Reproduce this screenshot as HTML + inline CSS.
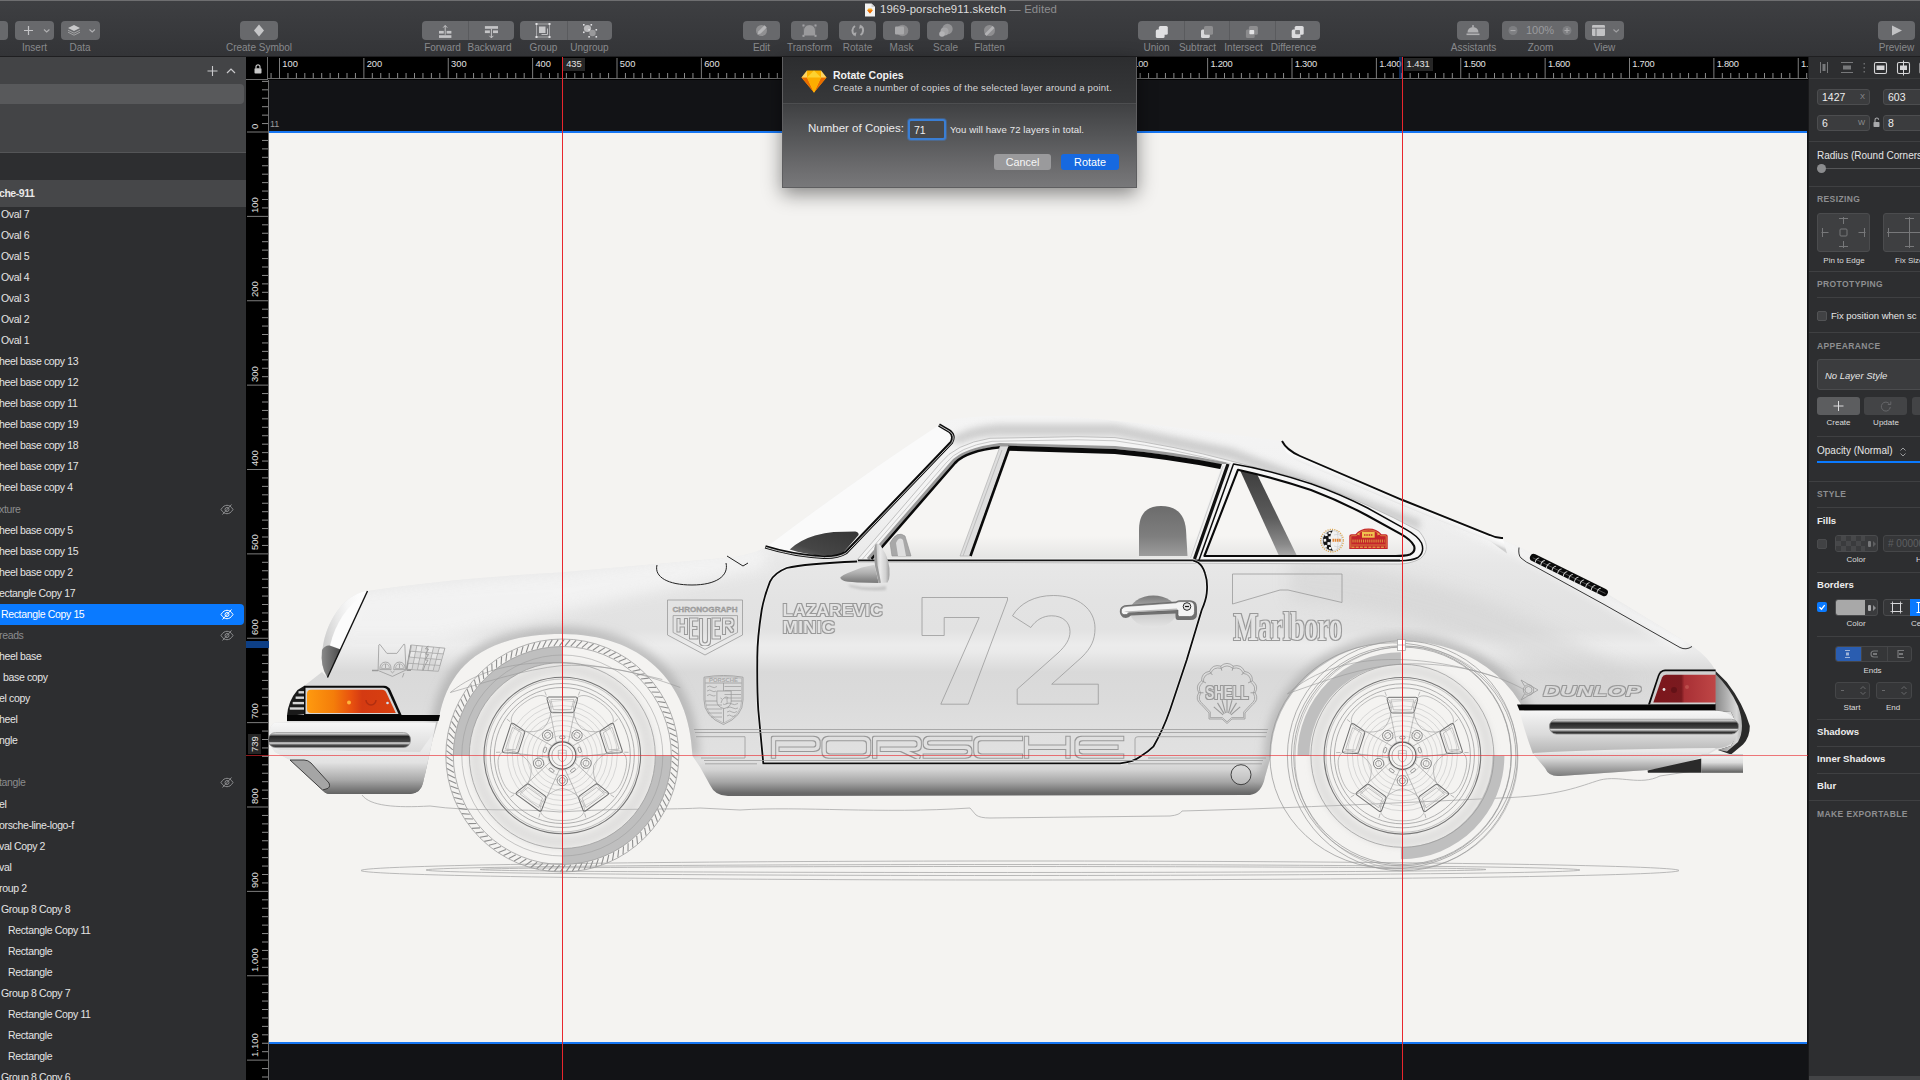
<!DOCTYPE html>
<html><head><meta charset="utf-8"><title>1969-porsche911.sketch</title>
<style>
*{box-sizing:border-box;margin:0;padding:0}
html,body{width:1920px;height:1080px;overflow:hidden;background:#121316;font-family:"Liberation Sans",sans-serif;}
body{position:relative;color:#e6e6e6;font-size:10.5px}
.abs{position:absolute}
#toolbar{position:absolute;left:0;top:0;width:1920px;height:57px;background:linear-gradient(#3e3f42 0px,#3a3b3e 20px,#333437 56px);border-top:1px solid #6e6e70;border-bottom:1px solid #1f1f21}
.tb{position:absolute;top:20px;height:19px;background:#68696c;border-radius:4px}
.tbl{position:absolute;top:41px;height:12px;line-height:12px;font-size:10px;color:#88898c;text-align:center;white-space:nowrap;transform:translateX(-50%)}
.tb svg{position:absolute;top:0;left:0}
.div{position:absolute;top:0;width:1px;height:19px;background:#5a5b5e}
#title{position:absolute;top:2px;left:880px;font-size:11.4px;color:#dcdcdc;white-space:nowrap;letter-spacing:0.1px}
#title span{color:#8e8e90}
#left{position:absolute;left:0;top:57px;width:246px;height:1023px;background:#2d2e30;overflow:hidden}
#left .top{position:absolute;left:0;top:0;width:246px;height:96px;background:#434446;border-bottom:1px solid #545557}
#left .pill{position:absolute;left:-6px;top:27px;width:250px;height:20px;border-radius:4px;background:#58595b}
#left .hdr{position:absolute;left:0;top:123px;width:246px;height:27px;background:#464749}
.row{position:absolute;left:0;width:246px;height:21px;line-height:21px;font-size:10.5px;letter-spacing:-0.35px;color:#e4e4e4;white-space:nowrap}
.row.dim{color:#8b8c8e}
.row.sel{background:#0a7aff;color:#fff;border-radius:0 4px 4px 0;width:244px}
.eye{position:absolute;left:220px;top:4px}
#rulerh{position:absolute;left:246px;top:57px;width:1562px;height:23px;background:#000;overflow:hidden}
#rulerv{position:absolute;left:246px;top:80px;width:23px;height:1000px;background:#000;overflow:hidden}
.rl{position:absolute;top:2px;font-size:9.3px;color:#e2e2e2;line-height:11px;white-space:nowrap}
.rlv{position:absolute;left:3px;font-size:9.5px;color:#e2e2e2;line-height:11px;white-space:nowrap;transform-origin:0 0;transform:rotate(-90deg)}
#artboard{position:absolute;left:269px;top:133px;width:1538px;height:910px;background:#f4f3f1}
#right{position:absolute;left:1808px;top:57px;width:112px;height:1023px;background:#2d2e30;overflow:hidden;border-left:1px solid #1a1a1c}
#right .sec{position:absolute;left:8px;font-size:8.5px;font-weight:bold;color:#8e8f91;letter-spacing:0.4px;white-space:nowrap}
#right .lab{position:absolute;font-size:10px;color:#e6e6e6;white-space:nowrap}
#right .blab{position:absolute;left:8px;font-size:9.6px;font-weight:bold;color:#ededed;white-space:nowrap}
#right .sm{position:absolute;font-size:8px;color:#dcdcdc;white-space:nowrap;transform:translateX(-50%)}
#right .hr{position:absolute;left:0;width:112px;height:1px;background:#3f4042}
#right .hr2{position:absolute;left:8px;width:104px;height:1px;background:#3f4042}
.fld{position:absolute;height:16px;background:#3b3c3e;border:1px solid #4c4d4f;border-radius:3px;font-size:10.5px;color:#eee;line-height:14px;padding-left:4px}
.fld i{position:absolute;right:4px;top:0;font-style:normal;font-size:7.5px;color:#8e8f91}
#dialog{position:absolute;left:782px;top:57px;width:355px;height:131px;background:linear-gradient(#2f3032 0,#3a3b3d 46px,#404143 48px,#545557 78px,#6a6a6c 108px,#79797b 131px);border:1px solid #5e5e60;border-top:none;box-shadow:0 6px 18px rgba(0,0,0,.45)}
</style></head><body>

<div id="artboard"></div>
<div class="abs" style="left:269px;top:131px;width:1538px;height:2px;background:#1676f3"></div>
<div class="abs" style="left:269px;top:1042px;width:1538px;height:2px;background:#1676f3"></div>
<div class="abs" style="left:270px;top:119px;font-size:9px;color:#9a9a9c">11</div>
<svg id="car" class="abs" style="left:269px;top:133px" width="1538" height="910" viewBox="269 133 1538 910">
<defs>
<linearGradient id="gBody" gradientUnits="userSpaceOnUse" x1="0" y1="415" x2="0" y2="800">
<stop offset="0.0000" stop-color="#f4f4f4"/><stop offset="0.2208" stop-color="#f1f1f1"/><stop offset="0.3377" stop-color="#ececec"/><stop offset="0.3896" stop-color="#e7e7e7"/><stop offset="0.4805" stop-color="#e3e3e3"/><stop offset="0.5584" stop-color="#e2e2e2"/><stop offset="0.5974" stop-color="#ececec"/><stop offset="0.6156" stop-color="#eaeaea"/><stop offset="0.6675" stop-color="#d9d9d9"/><stop offset="0.7403" stop-color="#dbdbdb"/><stop offset="0.8182" stop-color="#dfdfdf"/><stop offset="0.8961" stop-color="#e1e1e1"/><stop offset="0.9221" stop-color="#d2d2d2"/><stop offset="0.9532" stop-color="#a6a6a6"/><stop offset="0.9818" stop-color="#6a6a6a"/><stop offset="1.0000" stop-color="#5e5e5e"/>
</linearGradient>
<linearGradient id="gGlass" gradientUnits="userSpaceOnUse" x1="0" y1="440" x2="0" y2="560">
<stop offset="0" stop-color="#f6f5f3"/><stop offset=".8" stop-color="#f6f5f3"/><stop offset="1" stop-color="#e4e4e3"/></linearGradient>
<linearGradient id="gStrip" x1="0" y1="0" x2="0" y2="1">
<stop offset="0" stop-color="#f8f8f8"/><stop offset=".14" stop-color="#9a9a9a"/><stop offset=".26" stop-color="#262626"/><stop offset=".6" stop-color="#454545"/><stop offset=".7" stop-color="#e2e2e2"/><stop offset=".8" stop-color="#777"/><stop offset=".9" stop-color="#2e2e2e"/><stop offset="1" stop-color="#555"/></linearGradient>
<linearGradient id="gBump" x1="0" y1="0" x2="0" y2="1">
<stop offset="0" stop-color="#f7f7f7"/><stop offset=".2" stop-color="#ebebeb"/><stop offset=".55" stop-color="#dadada"/><stop offset=".75" stop-color="#c8c8c8"/><stop offset="1" stop-color="#b4b4b4"/></linearGradient>
<linearGradient id="gVal" gradientUnits="userSpaceOnUse" x1="0" y1="745" x2="0" y2="795">
<stop offset="0" stop-color="#ececec"/><stop offset=".35" stop-color="#e2e2e2"/><stop offset=".7" stop-color="#a9a9a9"/><stop offset="1" stop-color="#5d5d5d"/></linearGradient>
<linearGradient id="gValR" gradientUnits="userSpaceOnUse" x1="0" y1="751" x2="0" y2="777"><stop offset="0" stop-color="#eaeaea"/><stop offset=".3" stop-color="#d6d6d6"/><stop offset=".65" stop-color="#a6a6a6"/><stop offset="1" stop-color="#767676"/></linearGradient>
<linearGradient id="gAmber" x1="0" y1="0" x2="1" y2="0">
<stop offset="0" stop-color="#ff9a0f"/><stop offset=".3" stop-color="#f47d0a"/><stop offset=".5" stop-color="#e8510f"/><stop offset=".62" stop-color="#d43a12"/><stop offset="1" stop-color="#d8400f"/></linearGradient>
<linearGradient id="gRed" x1="0" y1="0" x2="1" y2="0">
<stop offset="0" stop-color="#7d161c"/><stop offset=".45" stop-color="#7a1a1f"/><stop offset=".5" stop-color="#a83035"/><stop offset="1" stop-color="#bf4646"/></linearGradient>
<linearGradient id="gPipe" x1="0" y1="0" x2="0" y2="1">
<stop offset="0" stop-color="#c9c9c9"/><stop offset=".15" stop-color="#efefef"/><stop offset=".45" stop-color="#dcdcdc"/><stop offset=".75" stop-color="#9a9a9a"/><stop offset="1" stop-color="#5a5a5a"/></linearGradient>
<linearGradient id="gDash" x1="0" y1="1" x2="1" y2="0"><stop offset="0" stop-color="#6a6a6a"/><stop offset=".3" stop-color="#464646"/><stop offset="1" stop-color="#363636"/></linearGradient>
<linearGradient id="gSeat" x1="0" y1="0" x2="0" y2="1"><stop offset="0" stop-color="#6c6c6c"/><stop offset=".6" stop-color="#7e7e7e"/><stop offset="1" stop-color="#9c9c9c"/></linearGradient>
<linearGradient id="gBar" x1="0" y1="0" x2="0" y2="1"><stop offset="0" stop-color="#3c3c3c"/><stop offset=".55" stop-color="#5c5c5c"/><stop offset=".85" stop-color="#8a8a8a"/><stop offset="1" stop-color="#b0b0b0"/></linearGradient>
<linearGradient id="gRG" gradientUnits="userSpaceOnUse" x1="1400" y1="499" x2="1397.5" y2="505"><stop offset="0" stop-color="#fbfbfb"/><stop offset=".6" stop-color="#eeeeee"/><stop offset="1" stop-color="#cfcfcf"/></linearGradient>
<linearGradient id="gMir" x1="0" y1="0" x2="0" y2="1"><stop offset="0" stop-color="#d2d2d2"/><stop offset=".45" stop-color="#b0b0b0"/><stop offset=".8" stop-color="#8a8a8a"/><stop offset="1" stop-color="#7a7a7a"/></linearGradient>
<linearGradient id="gWedge" x1="0" y1="0" x2="1" y2="0"><stop offset="0" stop-color="#8a8a8a"/><stop offset=".5" stop-color="#6a6a6a"/><stop offset="1" stop-color="#4a4a4a"/></linearGradient>
<linearGradient id="gRec" x1="0" y1="0" x2="0" y2="1"><stop offset="0" stop-color="#7a7a7a"/><stop offset=".35" stop-color="#a8a8a8"/><stop offset=".6" stop-color="#cdcdcd"/><stop offset="1" stop-color="#e4e4e4"/></linearGradient>
<linearGradient id="gMirH" x1="0" y1="0" x2="1" y2="0"><stop offset="0" stop-color="#b4b4b4"/><stop offset=".4" stop-color="#e9e9e9"/><stop offset=".75" stop-color="#d0d0d0"/><stop offset="1" stop-color="#9c9c9c"/></linearGradient>
<linearGradient id="gGuard" x1="0" y1="0" x2="1" y2="0"><stop offset="0" stop-color="#8a8a8a"/><stop offset=".45" stop-color="#b4b4b4"/><stop offset=".8" stop-color="#d8d8d8"/><stop offset="1" stop-color="#b0b0b0"/></linearGradient>
<linearGradient id="gHead" x1="0" y1=".5" x2="1" y2=".2"><stop offset="0" stop-color="#cdcdcd"/><stop offset=".35" stop-color="#e8e8e8"/><stop offset=".6" stop-color="#f6f6f6"/><stop offset="1" stop-color="#ffffff"/></linearGradient>
<filter id="ol" x="-5%" y="-5%" width="110%" height="110%"><feMorphology in="SourceAlpha" operator="dilate" radius="0.55" result="d"/><feComposite in="d" in2="SourceAlpha" operator="out" result="e"/><feFlood flood-color="#999999"/><feComposite in2="e" operator="in"/></filter>
<filter id="blur3"><feGaussianBlur stdDeviation="3"/></filter>
<filter id="blur5"><feGaussianBlur stdDeviation="5"/></filter>
<filter id="blur8"><feGaussianBlur stdDeviation="8"/></filter>
<filter id="blur1"><feGaussianBlur stdDeviation="1"/></filter>
</defs>
<clipPath id="cBody"><path d="M327.5,677.5 C318,665 320,630 342,605 C350,597 358,592 367.5,591 Q450,578.5 560,572.5 L735,557 Q755,553 766,547.5 Q850,483 937.5,426 C941,422 950,419.5 962,418 C990,415 1040,414.5 1080,417.5 C1140,422 1220,433 1282.5,441 C1290,452 1296,455 1302,457 L1402.5,500 L1500,539 L1517.5,546 L1605,592.5 L1692.5,646 Q1708,657 1715.6,670.4 L1715.6,711 L1731,712 Q1741,729 1731,746 L1716,750 Q1690,766 1648,770 L1560,776 Q1549,777 1545,768 L1535,756 A132,115 0 0 0 1271,756 L1265,777 Q1262,793 1250,795 L728,796 Q715,796 710,785 L700,767 L692.5,756 C690,680 640,634 562,634 C482,634 448,668 439,718 L432.5,740 L423,783 Q421,793 410,794 L330,794 Q325,794 322.5,790 L290,760 L275,752 L270,745 L269,735 Q270,722.5 276,722.5 L287,722 L287,715 Q288,702 297,691 L304,686 L322,672 Z"/></clipPath>
<g fill="none" stroke="#a9a9a9" stroke-width="0.8">
<ellipse cx="1020" cy="870.5" rx="659" ry="9.5"/>
<ellipse cx="1003" cy="870" rx="577" ry="5.5"/>
<ellipse cx="983" cy="869.5" rx="503" ry="3"/>
<path d="M362,795 C370,806 395,808 430,806 C470,812 520,808 560,812 C620,808 660,810 700,808 L740,810 C800,806 880,814 970,808 L976,815 Q980,818 990,818 L1170,816 Q1180,815 1182,811 L1250,809 C1330,806 1420,802 1500,798 C1560,796 1580,786 1600,780 C1620,775 1640,786 1660,776 L1700,770"/>
</g>
<path d="M327.5,677.5 C318,665 320,630 342,605 C350,597 358,592 367.5,591 Q450,578.5 560,572.5 L735,557 Q755,553 766,547.5 Q850,483 937.5,426 C941,422 950,419.5 962,418 C990,415 1040,414.5 1080,417.5 C1140,422 1220,433 1282.5,441 C1290,452 1296,455 1302,457 L1402.5,500 L1500,539 L1517.5,546 L1605,592.5 L1692.5,646 Q1708,657 1715.6,670.4 L1715.6,711 L1731,712 Q1741,729 1731,746 L1716,750 Q1690,766 1648,770 L1560,776 Q1549,777 1545,768 L1535,756 A132,115 0 0 0 1271,756 L1265,777 Q1262,793 1250,795 L728,796 Q715,796 710,785 L700,767 L692.5,756 C690,680 640,634 562,634 C482,634 448,668 439,718 L432.5,740 L423,783 Q421,793 410,794 L330,794 Q325,794 322.5,790 L290,760 L275,752 L270,745 L269,735 Q270,722.5 276,722.5 L287,722 L287,715 Q288,702 297,691 L304,686 L322,672 Z" fill="url(#gBody)"/>
<g clip-path="url(#cBody)">
<path d="M692.5,756 C690,680 640,634 562,634 C482,634 448,668 439,718 L423,783" fill="none" stroke="#9a9a9a" stroke-opacity=".55" stroke-width="14" filter="url(#blur5)"/>
<path d="M1535,756 A132,115 0 0 0 1271,756 L1265,777" fill="none" stroke="#9a9a9a" stroke-opacity=".55" stroke-width="14" filter="url(#blur5)"/>
<path d="M350,591 Q450,578.5 560,572.5 L766,547.5 L766,568 L660,590 L560,612 L440,640 L335,640Z" fill="#f6f6f6" opacity=".8" filter="url(#blur8)"/>
<path d="M1290,560 C1400,565 1520,600 1640,680 L1600,700 C1500,640 1400,610 1290,600Z" fill="#d2d2d2" opacity=".55" filter="url(#blur8)"/>
<path d="M1430,520 C1500,540 1580,590 1680,650 L1690,640 L1500,536Z" fill="#fafafa" opacity=".8" filter="url(#blur5)"/>
<path d="M960,444 Q975,436 1000,436 L1115,436 L1232,460 L1420,530 L1420,520 L1232,448 L1115,424 L1000,424 Q965,426 950,440Z" fill="#c2c2c2" opacity=".75" filter="url(#blur3)"/>
</g>
<path d="M767,546.5 Q851,483 937.5,426 L950,432 L952,441 L846,551 Q838,556 824,555.8 C800,554.5 780,550.5 767,546.5 Z" fill="#fafafa"/>
<path d="M789.700,549.5 Q800,540 815,535.600 Q825,532.5 833.700,531.900 L855.3,531.400 Q859,532 858.600,535 L843,553 Q836,556.5 824,555.8 Q805,554.5 789.700,549.5 Z" fill="url(#gDash)"/>
<path d="M765.3,546.900 C780,551.5 800,556 824,557.2 Q838,557.5 846,552.5 L951.3,442.5 Q955,436 950,431.5 L939,425" fill="none" stroke="#0c0c0c" stroke-width="3.600" stroke-linejoin="round"/>
<path d="M765.3,546.900 C780,551.5 800,556 824,557.2 Q838,557.5 846,552.5 L951.3,442.5 Q955,436 950,431.5 L939,425" fill="none" stroke="#f2f2f2" stroke-width="0.8" stroke-linejoin="round" transform="translate(0.400,0.400)"/>
<path d="M857,560 L940.5,463 Q955,444 990,438.3 L1077,436.700 L1115,437.600 Q1175,446 1231,461 L1305,480 Q1370,504 1419,531 Q1433,548 1420.5,558.5 Q1412,563.5 1400,564 L857,562 Z" fill="#f4f4f4" stroke="#b4b4b4" stroke-width="0.8"/>
<path d="M862.5,559 L946,463 Q958.5,447 992,441.3 L1077,439.8 L1115,440.8 Q1175,449 1231,464" fill="none" stroke="#c9c9c9" stroke-width="1"/>
<path d="M868,559 L951.5,463 Q963,449.5 1000,444.600 L1115,447.5 Q1170,452.5 1226,464" fill="none" stroke="#9a9a9a" stroke-width="3"/>
<path d="M872,558.5 L955.5,463.5 Q966.5,451.5 1000,448 L1115,452 Q1170,457 1224,468 L1193,558.5 Z" fill="url(#gGlass)"/>
<path d="M871.5,559 L955,463 Q966,451 1000,447.3" fill="none" stroke="#0a0a0a" stroke-width="2.600"/>
<path d="M1008,448.3 L1115,451.5 Q1170,456.5 1223,467" fill="none" stroke="#0a0a0a" stroke-width="5"/>
<path d="M1139,556 L1139,530 Q1139,506 1161,506 Q1184,506 1186,530 L1187.5,556 Z" fill="url(#gSeat)"/>
<path d="M1000,446.5 L1009,446.5 L970,556 L960,556 Z" fill="#dedede" stroke="#a9a9a9" stroke-width="0.6"/>
<path d="M1009.5,447 L970.5,556" stroke="#0a0a0a" stroke-width="2.600"/>
<path d="M1002,450 L963,556" stroke="#bdbdbd" stroke-width="1"/>
<path d="M890,543 Q897,530 905,536 L911,556 L892,556 Z" fill="#a8a8a8" stroke="#8e8e8e" stroke-width="0.6"/>
<path d="M896,543 Q899,536 903,540 L906,556 L898,556Z" fill="#dedede"/>
<path d="M1222,464 L1233,464 L1203,559 L1189,559 Z" fill="#f1f1f1"/>
<path d="M1228,464 L1194.5,559" stroke="#111" stroke-width="3.2"/>
<path d="M1223,466 L1190.5,558" stroke="#c4c4c4" stroke-width="0.8"/>
<path d="M1233.5,464 Q1270,470 1311,483.8 Q1340,494 1367.600,508 L1405,528.8 Q1418,536 1421.5,543 Q1425,552 1418,557.5 Q1412,560.700 1400,560.700 L1198.8,560.700 Z" fill="#f6f6f6"/>
<path d="M1238,469.700 Q1275,478 1311,490 Q1340,501 1367.600,515.700 L1401.400,534.400 Q1411,540 1414,545.700 Q1416,551.5 1410,554.5 Q1405,556 1395.8,556 L1204.400,556 Z" fill="url(#gGlass)"/>
<clipPath id="cQW"><path d="M1238,469.700 Q1275,478 1311,490 Q1340,501 1367.600,515.700 L1401.400,534.400 Q1411,540 1414,545.700 Q1416,551.5 1410,554.5 Q1405,556 1395.8,556 L1204.400,556 Z"/></clipPath>
<g clip-path="url(#cQW)"><path d="M1239,468 L1256,472 L1298,558 L1280,558 Z" fill="url(#gBar)"/></g>
<path d="M1238,469.700 Q1275,478 1311,490 Q1340,501 1367.600,515.700 L1401.400,534.400 Q1411,540 1414,545.700 Q1416,551.5 1410,554.5 Q1405,556 1395.8,556 L1204.400,556 Z" fill="none" stroke="#0a0a0a" stroke-width="2.100" stroke-linejoin="round"/>
<path d="M1233.5,464 Q1270,470 1311,483.8 Q1340,494 1367.600,508 L1405,528.8 Q1418,536 1421.5,543 Q1425,552 1418,557.5 Q1412,560.700 1400,560.700 L1198.8,560.700 Z" fill="none" stroke="#0a0a0a" stroke-width="1.5" stroke-linejoin="round"/>
<path d="M858,560.400 L1400,560.400" stroke="#151515" stroke-width="1.700"/>
<circle cx="1332" cy="540.600" r="11.3" fill="none" stroke="#d9a24a" stroke-width="1.3" stroke-dasharray="1.100 1.2"/>
<circle cx="1332" cy="540.600" r="10.2" fill="#f1f1f1" stroke="#b9b9b9" stroke-width="0.5"/>
<path d="M1333,530.400 A10.2,10.2 0 0 0 1333,550.8 Q1329,545 1331,540.600 Q1329,535 1333,530.400 Z" fill="#141414"/>
<g fill="#f4f4f4"><rect x="1325" y="533.5" width="2.600" height="2.600" transform="rotate(-12 1326 535)"/><rect x="1328.600" y="536.5" width="2.400" height="2.600" transform="rotate(-8 1329 538)"/><rect x="1323.600" y="538.8" width="2.600" height="2.8" transform="rotate(-5 1325 540)"/><rect x="1327.5" y="542" width="2.5" height="2.700" transform="rotate(6 1328 543)"/><rect x="1324.5" y="545" width="2.5" height="2.5" transform="rotate(12 1326 546)"/><rect x="1329" y="547" width="2.2" height="2.2"/><rect x="1328.5" y="531.8" width="2.3" height="2.2"/></g>
<path d="M1334,535 Q1338,533 1341,536 M1334,546 Q1338,548.5 1341,545 M1337,531 Q1340,540.600 1337,550" fill="none" stroke="#c4c4c4" stroke-width="0.5"/>
<path d="M1332.5,540.3 h8.5" stroke="#e07a20" stroke-width="3" stroke-dasharray="1.600 0.600" opacity=".9"/>
<path d="M1349.3,549 L1349.3,536 Q1349.3,534.2 1351.5,534.2 L1355.5,534.2 Q1360,528.400 1368.5,528.400 Q1377,528.400 1381.5,534.2 L1385.5,534.2 Q1387.700,534.2 1387.700,536 L1387.700,549 Z" fill="#c4242a"/>
<path d="M1350.8,547.8 L1350.8,536.5 Q1350.8,535.700 1352,535.700 L1356.3,535.700 Q1360.5,530 1368.5,530 Q1376.5,530 1380.700,535.700 L1385,535.700 Q1386.2,535.700 1386.2,536.5 L1386.2,547.8" fill="none" stroke="#e9b44c" stroke-width="0.6"/>
<rect x="1362" y="531.700" width="12.700" height="6" fill="#f0c24e"/><path d="M1364,535 h9" stroke="#c8252b" stroke-width="1.600" stroke-dasharray="1.5 0.8"/>
<path d="M1352.5,541 h32" stroke="#dc9a40" stroke-width="3.2" stroke-dasharray="1 1.100"/>
<path d="M1351.5,545 h34" stroke="#e9b44c" stroke-width="0.6"/><path d="M1351.5,547.2h34" stroke="#f0c24e" stroke-width="1" stroke-dasharray="3 1.2"/>
<path d="M1357,534 l2.5,-1.5 v3z M1380,534 l-2.5,-1.5 v3z" fill="#e9b44c"/><path d="M657,565 C654,577 668,585 692,585 C716,585 729,576 726,563" fill="none" stroke="#222" stroke-width="1"/>
<path d="M727,556 L743,566 L748,563" fill="none" stroke="#222" stroke-width="1"/>
<path d="M857,561.5 C820,563 795,566 786.7,568 Q774,573 770,581.7 Q764,597 761.7,610 Q757,640 757.3,660 Q757,690 758.3,710 L763.3,763.3 L1120,763.3 Q1133,762 1140,756.7 Q1148,752 1153.3,746.7 Q1163,730 1170,710 L1186.7,660 L1201.7,610 Q1206,600 1206.7,593.3 Q1208,582 1205,573.3 Q1203,566 1198,562.5 L1193,560.5" fill="none" stroke="#fff" stroke-opacity=".6" stroke-width="3"/>
<path d="M857,561.5 C820,563 795,566 786.7,568 Q774,573 770,581.7 Q764,597 761.7,610 Q757,640 757.3,660 Q757,690 758.3,710 L763.3,763.3 L1120,763.3 Q1133,762 1140,756.7 Q1148,752 1153.3,746.7 Q1163,730 1170,710 L1186.7,660 L1201.7,610 Q1206,600 1206.7,593.3 Q1208,582 1205,573.3 Q1203,566 1198,562.5 L1193,560.5" fill="none" stroke="#0c0c0c" stroke-width="1.8"/>
<path d="M848,584.5 Q868,589 886,586 L886,590 Q866,592 850,587 Z" fill="#a8a8a8" opacity=".5" filter="url(#blur1)"/>
<path d="M840.3,577.3 Q843,575 847.8,573.1 L861.8,567.5 L874.5,564.7 L878.7,582.9 L857.2,582.5 Q846,582 843.1,580.6 Q840,579 840.3,577.3 Z" fill="url(#gMir)"/>
<path d="M876.4,543.6 Q880,543.5 882.5,548.7 Q886.5,554 888.1,560.9 Q890,568 889.5,575 Q889.5,580 887.6,582.5 L878.7,582.9 L875,565.6 L874,552.5 Q874.5,545 876.4,543.6 Z" fill="url(#gMirH)"/>
<path d="M876.4,543.6 Q874.5,545 874,552.5 L875,565.6 L878.7,582.9 L881,582.8 L877.5,565 L876.8,552 Z" fill="#9a9a9a"/>
<ellipse cx="1153.3" cy="611.5" rx="23.5" ry="16" fill="url(#gRec)"/>
<path d="M1123,617.5 Q1119,614 1120,609.5 Q1121.5,605 1127,605 L1176,601.5 Q1178,600.3 1180,600.3 L1190.5,600.3 Q1197,601 1197,607 L1197,614 Q1197,620 1190.5,620 L1178,620 Q1175.5,620 1175.5,617 L1175.5,613.5 L1131,615.5 Q1128,619 1123,617.5 Z" fill="#707070"/>
<path d="M1123,614.5 Q1120.5,612.5 1121.5,609.5 Q1123,606.3 1127,606.3 L1176,602.8 Q1178,601.6 1180,601.6 L1189.5,601.6 Q1194.5,602 1194.5,607 L1194.5,611.5 Q1194.5,616.5 1189.5,616.5 L1179.5,616.5 Q1178,616.5 1178,614.5 L1178,610 L1129,612.5 Q1127,615.5 1123,614.5 Z" fill="#f4f4f4" stroke="#5a5a5a" stroke-width="0.6"/>
<path d="M1124,611.5 L1177,608.5 L1177,610 L1128.5,612.5 Z" fill="#b5b5b5"/>
<circle cx="1187" cy="606.5" r="3.8" fill="#e6e6e6" stroke="#2a2a2a" stroke-width="1"/><path d="M1185,606.5h4" stroke="#1a1a1a" stroke-width="1.2"/>
<path d="M367.5,591 C358,592 350,597 342,605 C320,630 318,665 327.5,677.5 Z" fill="url(#gHead)"/>
<path d="M365.5,592.5 L340.5,649 L330,645.5 Q338,612 365.5,592.5Z" fill="#fcfcfc"/>
<path d="M329.5,645.5 L340.5,649.5 L327.5,677.5 Q320,666 322,650 Q325,645 329.5,645.5 Z" fill="url(#gWedge)"/>
<path d="M367.5,591 L327.5,677.5" stroke="#111" stroke-width="1.4"/>
<path d="M287,716 Q288,701 297.5,690 L304,686 L307,686 L307,714 Z" fill="#1a1a1a"/>
<path d="M298.5,692.3 L306.5,692.3" stroke="#d6d6d6" stroke-width="2.4"/>
<path d="M295.6,697.7 L306.5,697.7" stroke="#d6d6d6" stroke-width="2.4"/>
<path d="M292.7,703.1 L306.5,703.1" stroke="#d6d6d6" stroke-width="2.4"/>
<path d="M289.8,708.5 L306.5,708.5" stroke="#d6d6d6" stroke-width="2.4"/>
<path d="M304,685.8 L384,685.8 Q388.5,686 390.5,690 L402,716 L304,716 Z" fill="#0a0a0a"/>
<path d="M305.5,687.8 L383,687.8 Q386.5,687.8 388,691 L398.5,714 L305.5,714 Z" fill="#d6d6d6"/>
<path d="M311,689.8 L382,689.8 Q385,689.8 386.5,693 L395.8,713 L311,713 Q307,713 307,709 L307,694 Q307,689.8 311,689.8 Z" fill="url(#gAmber)"/>
<circle cx="349" cy="702.5" r="2" fill="#ffb43a"/><path d="M366,700 a5,5 0 0 0 10,0" fill="none" stroke="#a82a10" stroke-width="1.5" opacity=".8"/><circle cx="387.5" cy="703" r="1.3" fill="#cfe0f0"/>
<path d="M287,715 L440,715 L438.5,721 L287,721 Z" fill="#050505"/>
<path d="M276,722.5 L436,722.5 L432.5,740 L425,775 Q424,752 270,746 L269,735 Q270,722.5 276,722.5 Z" fill="url(#gBump)"/>
<path d="M270,745 L275,752 L290,760 L322.5,790 Q325,794 330,794 L410,794 Q421,793 423,783 L432.5,740 L432,735 L420,752 L280,750 Z" fill="url(#gVal)"/>
<path d="M290,760 L304,760 Q308,760 311,763 L329,783 Q331,788 326,789 L322.5,790 Z" fill="#a5a5a5" stroke="#333" stroke-width="0.9"/>
<rect x="268.5" y="732.5" width="142" height="15" rx="7" fill="url(#gStrip)"/>
<rect x="268.5" y="732.5" width="142" height="15" rx="7" fill="none" stroke="#8c8c8c" stroke-width="0.7"/>
<path d="M1715.6,671 L1726.7,682 Q1743,703 1749.8,726 Q1750,737 1743,744.5 L1731,754.5 L1718,750 L1731,746 Q1741,729 1731,712 L1715.6,711 Z" fill="#2a2a2a"/>
<path d="M1715.6,674 Q1730,688 1738,706 Q1746,728 1738,742 L1727,751.5 L1718,750 L1731,746 Q1741,729 1731,712 L1715.6,711 Z" fill="url(#gGuard)"/>
<path d="M1648,704.6 L1657.8,675.5 Q1659.8,670 1665,669.6 L1715.6,669.6 L1715.6,705 Z" fill="#0a0a0a"/>
<path d="M1650,704.6 L1659.3,676 Q1660.8,671.3 1665.5,671.3 L1715.6,671.3 L1715.6,704.6 Z" fill="#cfcfcf"/>
<path d="M1653.3,702.5 L1662,677.5 Q1663,674.8 1666,674.8 L1715.6,674.8 L1715.6,702.5 Z" fill="url(#gRed)"/>
<circle cx="1664" cy="689.5" r="1.4" fill="#e6e6e6"/><circle cx="1674" cy="690" r="3" fill="#5e1015" opacity=".8"/><circle cx="1687" cy="687" r="2" fill="#c45a55" opacity=".7"/>
<path d="M1517,704.4 L1715.6,704.4 L1715.6,710.6 L1519.5,710.6 Z" fill="#050505"/>
<path d="M1519.5,710.8 L1715,710.8 Q1731,711 1736,722 Q1741,733 1733,742 Q1728,747.5 1716,748.5 L1600,752 Q1560,752 1533,754 Q1524,730 1519.5,710.8 Z" fill="url(#gBump)"/>
<path d="M1533,753 Q1600,749 1716,748 Q1690,766 1648,770 L1560,776 Q1549,777 1545,768 L1535,756 Z" fill="url(#gValR)"/>
<rect x="1549.5" y="719.3" width="189" height="14.8" rx="7" fill="url(#gStrip)"/>
<rect x="1549.5" y="719.3" width="189" height="14.8" rx="7" fill="none" stroke="#8c8c8c" stroke-width="0.7"/>
<path d="M1647.5,770.5 L1701.5,758.5 L1701.5,772.8 L1648,772.8 Z" fill="#2a2a2a"/>
<rect x="1701.5" y="754" width="41.5" height="18.8" fill="url(#gPipe)"/>
<path d="M1519,547.5 Q1518,555 1521,558 Q1525,562 1535,566.5 L1605,605 L1680,647.5 Q1686,650.5 1692,646.5" fill="none" stroke="#222" stroke-width="0.9"/>
<path d="M1282.5,442.5 Q1287,451 1300,457 L1402.5,501 L1490,536 Q1498,539.5 1503,539 L1507,553.5 L1490,541 L1402.5,505.5 L1298,461 Q1290,457 1286,452 Z" fill="url(#gRG)"/>
<path d="M1282,441 Q1286.5,450 1300,456 L1402.5,500 L1490,535 Q1497,538.5 1503,538" fill="none" stroke="#0c0c0c" stroke-width="1.9"/>
<g transform="translate(1532,552.6) rotate(26.2)"><rect x="0" y="0" width="86" height="7.6" rx="3.8" fill="#0a0a0a"/>
<path d="M7.2,7.6 Q6.0,3.5 8.8,1.5" fill="none" stroke="#dedede" stroke-width="0.9"/>
<path d="M13.4,7.6 Q12.2,3.5 15.0,1.5" fill="none" stroke="#dedede" stroke-width="0.9"/>
<path d="M19.7,7.6 Q18.5,3.5 21.3,1.5" fill="none" stroke="#dedede" stroke-width="0.9"/>
<path d="M25.9,7.6 Q24.8,3.5 27.6,1.5" fill="none" stroke="#dedede" stroke-width="0.9"/>
<path d="M32.2,7.6 Q31.0,3.5 33.8,1.5" fill="none" stroke="#dedede" stroke-width="0.9"/>
<path d="M38.5,7.6 Q37.2,3.5 40.1,1.5" fill="none" stroke="#dedede" stroke-width="0.9"/>
<path d="M44.7,7.6 Q43.5,3.5 46.3,1.5" fill="none" stroke="#dedede" stroke-width="0.9"/>
<path d="M51.0,7.6 Q49.8,3.5 52.6,1.5" fill="none" stroke="#dedede" stroke-width="0.9"/>
<path d="M57.2,7.6 Q56.0,3.5 58.8,1.5" fill="none" stroke="#dedede" stroke-width="0.9"/>
<path d="M63.5,7.6 Q62.2,3.5 65.0,1.5" fill="none" stroke="#dedede" stroke-width="0.9"/>
<path d="M69.7,7.6 Q68.5,3.5 71.3,1.5" fill="none" stroke="#dedede" stroke-width="0.9"/>
<path d="M76.0,7.6 Q74.8,3.5 77.5,1.5" fill="none" stroke="#dedede" stroke-width="0.9"/>
<path d="M3,4.3 H84" stroke="#f0f0f0" stroke-width="0.5" stroke-opacity=".55"/>
</g><g fill="none" stroke="#9a9a9a" stroke-width="0.8">
<path d="M922,597.5 L1007.5,597.5 L1007.5,600 L968.3,704.2 L940.8,704.2 L979.2,617.5 L944.2,617.5 L944.2,635.5 L922,635.5 Z"/>
<path d="M1012.5,615.8 C1020,603 1035,595.5 1053.3,595.5 C1078,595.5 1095,609 1095,628.3 C1095,640 1091,648 1082,657 L1051.7,684.2 L1098.3,684.2 L1098.3,704.2 L1017.2,704.2 L1017.2,689.2 L1058,653 C1066,645.5 1070,639 1070,631.7 C1070,622 1062.5,615.8 1051.7,615.8 C1043,615.8 1036,620 1030.8,627.5 Z"/>
<path d="M1232.5,574 L1342,574 L1342,602.5 L1288,590 L1280,590 L1232.5,604 Z"/>
<path d="M667.5,600 L742.5,600 L742.5,635 L705,655 L667.5,635 Z"/>
<path d="M673.1,615.6 L737.5,615.6 L737.5,632.5 L705,649.4 L673.1,632.5 Z"/>
<path d="M694,729.5 L1268,729.5 M695,732.5 L1267,732.5 M704,760.5 L1263,760.5 M705,763.8 L757,763.8 M1128,763.8 L1262,763.8"/>
<path d="M696,736.7 L745,736.7 L745,758 L701,758 M1135,758 L1135,739 Q1135,736.7 1138,736.7 L1266,736.7 M1266,758 L1148,758"/>
<circle cx="1241" cy="774.7" r="10" stroke="#333" stroke-width="0.9" fill="#d8d8d8" fill-opacity=".5"/>
</g>
<g filter="url(#ol)" font-family="Liberation Sans, sans-serif" font-weight="bold" fill="#000">
<text x="782.5" y="616.3" font-size="17.3" textLength="100" lengthAdjust="spacingAndGlyphs">LAZAREVIC</text>
<text x="782.5" y="632.5" font-size="17.3" textLength="52.5" lengthAdjust="spacingAndGlyphs">MINIC</text>
<text x="1543" y="695.7" font-size="15.5" font-style="italic" textLength="98" lengthAdjust="spacingAndGlyphs">DUNLOP</text>
<text x="1205.5" y="699.2" font-size="18.6" textLength="43" lengthAdjust="spacingAndGlyphs">SHELL</text>
</g>
<g filter="url(#ol)" font-family="Liberation Serif, serif" font-weight="bold" fill="#000"><text x="1233.5" y="640" font-size="41" textLength="108.5" lengthAdjust="spacingAndGlyphs">Marlboro</text></g>
<text x="672.5" y="611.8" font-family="Liberation Sans, sans-serif" font-weight="bold" font-size="7.4" fill="#aaaaaa" stroke="#8c8c8c" stroke-width="0.3" textLength="65" lengthAdjust="spacingAndGlyphs">CHRONOGRAPH</text>
<g filter="url(#ol)"><path d="M773.5,757.80000000001 L773.5,738.5 L813.0,738.5 Q818.0,738.5 818.0,743.5 L818.0,745.3 Q818.0,749.3 813.0,749.3 L779.5,749.3 M829.1,738.5 L863.6,738.5 Q868.6,738.5 868.6,743.5 L868.6,751.1 Q868.6,756.1 863.6,756.1 L829.1,756.1 Q824.1,756.1 824.1,751.1 L824.1,743.5 Q824.1,738.5 829.1,738.5 Z M874.7,757.80000000001 L874.7,738.5 L914.2,738.5 Q919.2,738.5 919.2,743.5 L919.2,745.3 Q919.2,749.3 914.2,749.3 L880.7,749.3 M901.2,749.3 L919.2,757.80000000001 M971.5,738.5 L930.3,738.5 Q925.3,738.5 925.3,742.5 L925.3,743.3 Q925.3,747.3 930.3,747.3 L964.8,747.3 Q969.8,747.3 969.8,751.3 L969.8,752.1 Q969.8,756.1 964.8,756.1 L923.5999999999999,756.1 M1022.1,738.5 L980.9,738.5 Q975.9,738.5 975.9,743.5 L975.9,751.1 Q975.9,756.1 980.9,756.1 L1022.1,756.1 M1026.5,736.8 L1026.5,757.80000000001 M1068.0,736.8 L1068.0,757.80000000001 M1026.5,747.3 L1068.0,747.3 M1123.3,738.5 L1082.1,738.5 Q1077.1,738.5 1077.1,743.5 L1077.1,751.1 Q1077.1,756.1 1082.1,756.1 L1123.3,756.1 M1077.1,747.3 L1117.6,747.3" fill="none" stroke="#000" stroke-width="3.4" stroke-linejoin="round"/></g>
<g filter="url(#ol)"><path d="M678.5,619 V631.5 M686,619 V634 M678.5,625.5 H686 M697.5,619.5 H691 V637.5 H697.5 M691,628 H696.5 M701,619 V640.5 Q701,644.5 705,644.5 Q709,644.5 709,640.5 V619 M720,619.5 H713.5 V637.5 H720 M713.5,628 H719 M724,634 V619.5 H729.5 Q732.5,619.5 732.5,622.5 Q732.5,625.5 729.5,625.5 H724 M728,625.5 L732.5,631.5" fill="none" stroke="#000" stroke-width="2.1" stroke-linecap="butt" stroke-linejoin="miter"/></g>
<g fill="none" stroke="#9a9a9a" stroke-width="0.8">
<path d="M378.1,670.5 L378.8,645 L379.8,644.3 L386.9,653.4 L396.9,653.4 L404,644 L404.8,644.6 L406,670 L392.4,676.4 Z"/>
<path d="M372,670.5 L378,670.5 M406.5,670.3 L411,670.3" stroke-width="1.6"/>
<path d="M379.8,669.6 Q380,662.1 385.5,662.1 Q391,662.1 391.1,669.6 Z M393.7,669.6 Q394,662.1 399.5,662.1 Q405,662.1 405.3,669.6 Z"/>
<path d="M381.5,668.5 Q382,664 385.5,663.8 Q389,664 389.5,668.5 Z M395.5,668.5 Q396,664 399.5,663.8 Q403,664 403.5,668.5 Z" stroke-width="0.6"/>
<path d="M385.5,664 v4 M399.5,664 v4 M390.5,671 l2,1.8 l2,-1.8 M404,673 L402.4,677.4" />
<path d="M411.2,645.0L406.7,669.3M416.8,645.5L412.0,669.6M422.4,646.1L417.3,669.9M428.0,646.6L422.5,670.2M433.7,647.1L427.8,670.6M439.3,647.7L433.1,670.9M444.9,648.2L438.4,671.2M411.2,645.0L444.9,648.2M410.1,651.1L443.3,654.0M408.9,657.1L441.6,659.7M407.8,663.2L440.0,665.5M406.7,669.3L438.4,671.2"/>
<path d="M411.2,645 L406.7,669.3" stroke-width="1.5"/>
<path d="M411.2,645.0L416.8,645.5L415.6,651.6L410.1,651.1Z" fill="#cfcfcf" fill-opacity=".5" stroke="none"/>
<path d="M408.9,657.1L414.4,657.6L413.2,663.6L407.8,663.2Z" fill="#cfcfcf" fill-opacity=".5" stroke="none"/>
<path d="M415.6,651.6L421.1,652.0L419.9,658.0L414.4,657.6Z" fill="#cfcfcf" fill-opacity=".5" stroke="none"/>
<path d="M413.2,663.6L418.6,664.0L417.3,669.9L412.0,669.6Z" fill="#cfcfcf" fill-opacity=".5" stroke="none"/>
<path d="M422.4,646.1L428.0,646.6L426.7,652.5L421.1,652.0Z" fill="#cfcfcf" fill-opacity=".5" stroke="none"/>
<path d="M419.9,658.0L425.3,658.4L423.9,664.3L418.6,664.0Z" fill="#cfcfcf" fill-opacity=".5" stroke="none"/>
<path d="M426.7,652.5L432.2,653.0L430.8,658.9L425.3,658.4Z" fill="#cfcfcf" fill-opacity=".5" stroke="none"/>
<path d="M423.9,664.3L429.3,664.7L427.8,670.6L422.5,670.2Z" fill="#cfcfcf" fill-opacity=".5" stroke="none"/>
<path d="M433.7,647.1L439.3,647.7L437.7,653.5L432.2,653.0Z" fill="#cfcfcf" fill-opacity=".5" stroke="none"/>
<path d="M430.8,658.9L436.2,659.3L434.7,665.1L429.3,664.7Z" fill="#cfcfcf" fill-opacity=".5" stroke="none"/>
<path d="M437.7,653.5L443.3,654.0L441.6,659.7L436.2,659.3Z" fill="#cfcfcf" fill-opacity=".5" stroke="none"/>
<path d="M434.7,665.1L440.0,665.5L438.4,671.2L433.1,670.9Z" fill="#cfcfcf" fill-opacity=".5" stroke="none"/>
<path d="M428,645.8 l-2.5,3 l3,0.3 l-3,5 l3,0.3 l-3.5,5.5 l3,0.3 l-3,5 l-2,5.5" stroke-width="0.9"/>
<path d="M704,677.2 Q723.5,673.8 743,677.2 L743,700 Q743,716.5 723.5,724.5 Q704,716.5 704,700 Z"/>
<path d="M705.3,678.3 Q723.5,675.2 741.7,678.3 L741.7,700 Q741.7,715.5 723.5,723 Q705.3,715.5 705.3,700 Z" stroke-width="0.5"/>
<path d="M705.3,683 H741.7 M723.5,683 V691 M723.5,708.5 V722.8 M705.3,701 H717 M731,701 H741.7"/>
<path d="M724.5,686.5 H741 M724.5,690.5 H741 M724.5,694.5 H741 M724.5,698 H741 M706,705 H722 M706.5,709 H722 M708,713 H722 M711,717 H722" stroke-width="1.2" stroke-opacity=".7"/>
<path d="M716.9,691 H731.2 V701 Q731.2,707 724,708.6 Q716.9,707 716.9,701 Z"/>
<path d="M721,703 q1,-4 3,-5 q2,-2 4,-0.5 q-1.5,1 -1,3 q1,2 -1,3.5 q-1.5,1 -3,0 M722,699 l-1.5,-1" stroke-width="0.7"/>
<path d="M707,687 q3,-2 5,0 q2,1.5 5,-0.5 M707,691 q3,-2 5,0 q2,1.5 4,0 M707,695.5 q3,-2 5,0 q2,1 3.5,0 M727,712 q3,-2 5,0 q2,1.5 5,-0.5 M727,716 q2.5,-2 4.5,0 q2,1 4,-0.5 M726,704 q3,-2 6,0 q2,1.5 6,-0.5 M727,708 q3,-2 6,0 q2,1.5 5,0" stroke-width="0.7"/>
<text x="709" y="681.8" font-family="Liberation Sans, sans-serif" font-weight="bold" font-size="4.6" fill="#a8a8a8" stroke="none" textLength="29" lengthAdjust="spacingAndGlyphs">PORSCHE</text>
<path d="M1201.4,704.7 Q1194.6,699.8 1198.7,692.7 Q1194.8,685.5 1201.6,680.8 Q1201.2,672.7 1209.5,671.3 Q1212.7,663.9 1220.7,666.1 Q1227.0,660.7 1233.3,666.1 Q1241.3,663.9 1244.6,671.4 Q1252.8,672.7 1252.4,680.9 Q1259.2,685.6 1255.3,692.7 Q1259.4,699.9 1252.6,704.7 L1245.0,713.0 L1245.0,719.0 L1232.0,719.0 L1227.0,723.5 L1222.0,719.0 L1209.0,719.0 L1209.0,713.0 Z"/>
<path d="M1203.1,704.3 Q1196.9,699.9 1200.7,693.2 Q1197.0,686.6 1203.4,682.1 Q1203.0,674.6 1210.7,673.3 Q1213.7,666.4 1221.2,668.4 Q1227.0,663.5 1232.8,668.4 Q1240.3,666.4 1243.3,673.3 Q1251.0,674.7 1250.6,682.1 Q1257.0,686.6 1253.3,693.2 Q1257.1,699.9 1250.8,704.3 L1243.7,712.0 L1243.7,717.6 L1231.7,717.6 L1227.0,721.8 L1222.3,717.6 L1210.3,717.6 L1210.3,712.0 Z"/>
<path d="M1223.1,714.9 L1213.8,706.8" stroke-width="1.1"/>
<path d="M1224.2,713.9 L1217.5,702.9" stroke-width="1.1"/>
<path d="M1225.5,713.2 L1222.0,700.2" stroke-width="1.1"/>
<path d="M1227.0,713.0 L1227.0,699.0" stroke-width="1.1"/>
<path d="M1228.5,713.2 L1232.0,700.2" stroke-width="1.1"/>
<path d="M1229.8,713.9 L1236.5,702.9" stroke-width="1.1"/>
<path d="M1230.9,714.9 L1240.2,706.8" stroke-width="1.1"/>
<path d="M1198.7,692.7 L1203.5,692.8" stroke-width="0.9"/>
<path d="M1201.6,680.8 L1205.9,682.9" stroke-width="0.9"/>
<path d="M1209.5,671.3 L1212.4,675.0" stroke-width="0.9"/>
<path d="M1220.7,666.1 L1221.8,670.7" stroke-width="0.9"/>
<path d="M1233.3,666.1 L1232.2,670.7" stroke-width="0.9"/>
<path d="M1244.6,671.4 L1241.6,675.0" stroke-width="0.9"/>
<path d="M1252.4,680.9 L1248.1,682.9" stroke-width="0.9"/>
<path d="M1255.3,692.7 L1250.5,692.8" stroke-width="0.9"/>
<path d="M1521,680 L1538,690 L1521,700 L1524.5,694 M1521,680 L1524.5,686"/><circle cx="1528.5" cy="690" r="5.2"/><circle cx="1528.5" cy="690" r="3.5"/>
</g>
<g transform="translate(562.3,755.5)" fill="none" stroke="#9a9a9a" stroke-width="0.75">
<circle r="86.5" stroke="#bdbdbd" stroke-opacity=".35" stroke-width="13.0" filter="url(#blur3)"/>
<g transform="translate(0,0)"><path d="M-109.00,0.00 A109,109 0 0 1 -0.00,-109.00 L-0.00,-93.00 A93,93 0 0 0 -93.00,0.00 Z" fill="#bfbfbf" stroke="none"/><path d="M109.00,0.00 A109,109 0 0 1 0.00,109.00 L0.00,93.00 A93,93 0 0 0 93.00,0.00 Z" fill="#bfbfbf" stroke="none"/></g>
<circle r="116.5"/><circle r="109"/><circle r="93"/>
<circle r="100.5" stroke-opacity=".7"/>
<path d="M109.6,0.0L115.9,4.9M109.5,5.6L115.5,10.8M109.0,11.3L114.8,16.7M108.3,16.9L113.8,22.6M107.3,22.4L112.5,28.5M106.0,27.9L110.8,34.2M104.4,33.3L108.9,39.9M102.6,38.7L106.7,45.4M100.4,43.9L104.3,50.9M98.0,49.0L101.5,56.2M95.4,54.0L98.5,61.3M92.5,58.8L95.2,66.3M89.3,63.5L91.6,71.1M85.9,68.0L87.9,75.7M82.3,72.4L83.8,80.2M78.5,76.5L79.6,84.4M74.4,80.4L75.2,88.4M70.2,84.2L70.5,92.1M65.8,87.7L65.7,95.6M61.2,90.9L60.7,98.9M56.4,94.0L55.5,101.9M51.5,96.7L50.2,104.6M46.5,99.3L44.7,107.0M41.3,101.5L39.2,109.2M36.0,103.5L33.5,111.1M30.6,105.2L27.7,112.6M25.2,106.7L21.9,113.9M19.6,107.8L16.0,114.9M14.1,108.7L10.1,115.6M8.5,109.3L4.1,115.9M2.8,109.6L-1.9,116.0M-2.8,109.6L-7.8,115.7M-8.5,109.3L-13.8,115.2M-14.1,108.7L-19.7,114.3M-19.6,107.8L-25.6,113.1M-25.2,106.7L-31.3,111.7M-30.6,105.2L-37.1,109.9M-36.0,103.5L-42.7,107.9M-41.3,101.5L-48.2,105.5M-46.5,99.3L-53.5,102.9M-51.5,96.7L-58.8,100.0M-56.4,94.0L-63.8,96.9M-61.2,90.9L-68.7,93.4M-65.8,87.7L-73.4,89.8M-70.2,84.2L-78.0,85.9M-74.4,80.4L-82.3,81.8M-78.5,76.5L-86.4,77.4M-82.3,72.4L-90.3,72.9M-85.9,68.0L-93.9,68.1M-89.3,63.5L-97.3,63.2M-92.5,58.8L-100.4,58.1M-95.4,54.0L-103.3,52.9M-98.0,49.0L-105.8,47.5M-100.4,43.9L-108.1,42.0M-102.6,38.7L-110.2,36.3M-104.4,33.3L-111.9,30.6M-106.0,27.9L-113.3,24.8M-107.3,22.4L-114.4,19.0M-108.3,16.9L-115.3,13.0M-109.0,11.3L-115.8,7.1M-109.5,5.6L-116.0,1.1M-109.6,0.0L-115.9,-4.9M-109.5,-5.6L-115.5,-10.8M-109.0,-11.3L-114.8,-16.7M-108.3,-16.9L-113.8,-22.6M-107.3,-22.4L-112.5,-28.5M-106.0,-27.9L-110.8,-34.2M-104.4,-33.3L-108.9,-39.9M-102.6,-38.7L-106.7,-45.4M-100.4,-43.9L-104.3,-50.9M-98.0,-49.0L-101.5,-56.2M-95.4,-54.0L-98.5,-61.3M-92.5,-58.8L-95.2,-66.3M-89.3,-63.5L-91.6,-71.1M-85.9,-68.0L-87.9,-75.7M-82.3,-72.4L-83.8,-80.2M-78.5,-76.5L-79.6,-84.4M-74.4,-80.4L-75.2,-88.4M-70.2,-84.2L-70.5,-92.1M-65.8,-87.7L-65.7,-95.6M-61.2,-90.9L-60.7,-98.9M-56.4,-94.0L-55.5,-101.9M-51.5,-96.7L-50.2,-104.6M-46.5,-99.3L-44.7,-107.0M-41.3,-101.5L-39.2,-109.2M-36.0,-103.5L-33.5,-111.1M-30.6,-105.2L-27.7,-112.6M-25.2,-106.7L-21.9,-113.9M-19.6,-107.8L-16.0,-114.9M-14.1,-108.7L-10.1,-115.6M-8.5,-109.3L-4.1,-115.9M-2.8,-109.6L1.9,-116.0M2.8,-109.6L7.8,-115.7M8.5,-109.3L13.8,-115.2M14.1,-108.7L19.7,-114.3M19.6,-107.8L25.6,-113.1M25.2,-106.7L31.3,-111.7M30.6,-105.2L37.1,-109.9M36.0,-103.5L42.7,-107.9M41.3,-101.5L48.2,-105.5M46.5,-99.3L53.5,-102.9M51.5,-96.7L58.8,-100.0M56.4,-94.0L63.8,-96.9M61.2,-90.9L68.7,-93.4M65.8,-87.7L73.4,-89.8M70.2,-84.2L78.0,-85.9M74.4,-80.4L82.3,-81.8M78.5,-76.5L86.4,-77.4M82.3,-72.4L90.3,-72.9M85.9,-68.0L93.9,-68.1M89.3,-63.5L97.3,-63.2M92.5,-58.8L100.4,-58.1M95.4,-54.0L103.3,-52.9M98.0,-49.0L105.8,-47.5M100.4,-43.9L108.1,-42.0M102.6,-38.7L110.2,-36.3M104.4,-33.3L111.9,-30.6M106.0,-27.9L113.3,-24.8M107.3,-22.4L114.4,-19.0M108.3,-16.9L115.3,-13.0M109.0,-11.3L115.8,-7.1M109.5,-5.6L116.0,-1.1" stroke="#8e8e8e" stroke-width="1.1"/>
<path d="M-112,-63 C-60,-105 20,-96 100,-76 M-112,-63 C-80,-72 -40,-86 0,-90 C50,-92 90,-78 118,-68" stroke-opacity=".8"/>
<circle r="78.3" stroke="#777" stroke-width="1.1"/><circle r="76.5" stroke-opacity=".7"/><circle r="72"/><circle r="68"/>
<circle r="15" stroke="#c2c2c2" stroke-width="0.6"/>
<circle r="20" stroke="#c2c2c2" stroke-width="0.6"/>
<circle r="25" stroke="#c2c2c2" stroke-width="0.6"/>
<circle r="30" stroke="#c2c2c2" stroke-width="0.6"/>
<circle r="35" stroke="#c2c2c2" stroke-width="0.6"/>
<circle r="40" stroke="#c2c2c2" stroke-width="0.6"/>
<circle r="45" stroke="#c2c2c2" stroke-width="0.6"/>
<circle r="50" stroke="#c2c2c2" stroke-width="0.6"/>
<circle r="55" stroke="#c2c2c2" stroke-width="0.6"/>
<g transform="rotate(0)">
<path d="M-13.5,-58.5 L13.5,-58.5 Q15.8,-58.5 15.2,-56 L12,-44.5 Q11.5,-42.8 9.8,-42.8 L-9.8,-42.8 Q-11.5,-42.8 -12,-44.5 L-15.2,-56 Q-15.8,-58.5 -13.5,-58.5 Z" stroke="#6e6e6e" stroke-width="1"/>
<path d="M-11.5,-56 L11.5,-56 L9,-46 L-9,-46 Z" stroke-opacity=".7"/>
<path d="M-12,-43 L-6,-13 M12,-43 L6,-13 M-16,-60 L-17.5,-64 M16,-60 L17.5,-64" stroke-opacity=".8"/>
<rect x="-2.8" y="-19.5" width="5.6" height="2.6" rx="1.3" stroke="#888"/>
</g>
<g transform="rotate(36)">
<path d="M0,-65 C12,-65 21,-62 22,-55 C23,-47 13,-35 0,-33 C-13,-35 -23,-47 -22,-55 C-21,-62 -12,-65 0,-65 Z" stroke-opacity=".75"/>
</g>
<g transform="rotate(180)">
<circle cx="0" cy="-25" r="5.2" stroke="#777"/><circle cx="0" cy="-25" r="3" stroke="#888"/>
</g>
<g transform="rotate(72)">
<path d="M-13.5,-58.5 L13.5,-58.5 Q15.8,-58.5 15.2,-56 L12,-44.5 Q11.5,-42.8 9.8,-42.8 L-9.8,-42.8 Q-11.5,-42.8 -12,-44.5 L-15.2,-56 Q-15.8,-58.5 -13.5,-58.5 Z" stroke="#6e6e6e" stroke-width="1"/>
<path d="M-11.5,-56 L11.5,-56 L9,-46 L-9,-46 Z" stroke-opacity=".7"/>
<path d="M-12,-43 L-6,-13 M12,-43 L6,-13 M-16,-60 L-17.5,-64 M16,-60 L17.5,-64" stroke-opacity=".8"/>
<rect x="-2.8" y="-19.5" width="5.6" height="2.6" rx="1.3" stroke="#888"/>
</g>
<g transform="rotate(108)">
<path d="M0,-65 C12,-65 21,-62 22,-55 C23,-47 13,-35 0,-33 C-13,-35 -23,-47 -22,-55 C-21,-62 -12,-65 0,-65 Z" stroke-opacity=".75"/>
</g>
<g transform="rotate(252)">
<circle cx="0" cy="-25" r="5.2" stroke="#777"/><circle cx="0" cy="-25" r="3" stroke="#888"/>
</g>
<g transform="rotate(144)">
<path d="M-13.5,-58.5 L13.5,-58.5 Q15.8,-58.5 15.2,-56 L12,-44.5 Q11.5,-42.8 9.8,-42.8 L-9.8,-42.8 Q-11.5,-42.8 -12,-44.5 L-15.2,-56 Q-15.8,-58.5 -13.5,-58.5 Z" stroke="#6e6e6e" stroke-width="1"/>
<path d="M-11.5,-56 L11.5,-56 L9,-46 L-9,-46 Z" stroke-opacity=".7"/>
<path d="M-12,-43 L-6,-13 M12,-43 L6,-13 M-16,-60 L-17.5,-64 M16,-60 L17.5,-64" stroke-opacity=".8"/>
<rect x="-2.8" y="-19.5" width="5.6" height="2.6" rx="1.3" stroke="#888"/>
</g>
<g transform="rotate(180)">
<path d="M0,-65 C12,-65 21,-62 22,-55 C23,-47 13,-35 0,-33 C-13,-35 -23,-47 -22,-55 C-21,-62 -12,-65 0,-65 Z" stroke-opacity=".75"/>
</g>
<g transform="rotate(324)">
<circle cx="0" cy="-25" r="5.2" stroke="#777"/><circle cx="0" cy="-25" r="3" stroke="#888"/>
</g>
<g transform="rotate(216)">
<path d="M-13.5,-58.5 L13.5,-58.5 Q15.8,-58.5 15.2,-56 L12,-44.5 Q11.5,-42.8 9.8,-42.8 L-9.8,-42.8 Q-11.5,-42.8 -12,-44.5 L-15.2,-56 Q-15.8,-58.5 -13.5,-58.5 Z" stroke="#6e6e6e" stroke-width="1"/>
<path d="M-11.5,-56 L11.5,-56 L9,-46 L-9,-46 Z" stroke-opacity=".7"/>
<path d="M-12,-43 L-6,-13 M12,-43 L6,-13 M-16,-60 L-17.5,-64 M16,-60 L17.5,-64" stroke-opacity=".8"/>
<rect x="-2.8" y="-19.5" width="5.6" height="2.6" rx="1.3" stroke="#888"/>
</g>
<g transform="rotate(252)">
<path d="M0,-65 C12,-65 21,-62 22,-55 C23,-47 13,-35 0,-33 C-13,-35 -23,-47 -22,-55 C-21,-62 -12,-65 0,-65 Z" stroke-opacity=".75"/>
</g>
<g transform="rotate(396)">
<circle cx="0" cy="-25" r="5.2" stroke="#777"/><circle cx="0" cy="-25" r="3" stroke="#888"/>
</g>
<g transform="rotate(288)">
<path d="M-13.5,-58.5 L13.5,-58.5 Q15.8,-58.5 15.2,-56 L12,-44.5 Q11.5,-42.8 9.8,-42.8 L-9.8,-42.8 Q-11.5,-42.8 -12,-44.5 L-15.2,-56 Q-15.8,-58.5 -13.5,-58.5 Z" stroke="#6e6e6e" stroke-width="1"/>
<path d="M-11.5,-56 L11.5,-56 L9,-46 L-9,-46 Z" stroke-opacity=".7"/>
<path d="M-12,-43 L-6,-13 M12,-43 L6,-13 M-16,-60 L-17.5,-64 M16,-60 L17.5,-64" stroke-opacity=".8"/>
<rect x="-2.8" y="-19.5" width="5.6" height="2.6" rx="1.3" stroke="#888"/>
</g>
<g transform="rotate(324)">
<path d="M0,-65 C12,-65 21,-62 22,-55 C23,-47 13,-35 0,-33 C-13,-35 -23,-47 -22,-55 C-21,-62 -12,-65 0,-65 Z" stroke-opacity=".75"/>
</g>
<g transform="rotate(468)">
<circle cx="0" cy="-25" r="5.2" stroke="#777"/><circle cx="0" cy="-25" r="3" stroke="#888"/>
</g>
<circle r="13.6" stroke="#666" stroke-width="1.2"/><circle r="10.5"/><path d="M-4,-5 Q0,-6 4,-5 L4,2 Q3.5,5 0,6.5 Q-3.5,5 -4,2 Z" stroke-width="0.6"/><path d="M-4,-2.5h8M0,-2.5V6" stroke-width="0.5"/>
</g>
<g transform="translate(1402.4,755.8)" fill="none" stroke="#9a9a9a" stroke-width="0.75">
<circle r="85.8" stroke="#bdbdbd" stroke-opacity=".35" stroke-width="11.5" filter="url(#blur3)"/>
<g transform="translate(-1.5,0)"><path d="M-103.50,0.00 A103.5,103.5 0 0 1 -0.00,-103.50 L-0.00,-91.50 A91.5,91.5 0 0 0 -91.50,0.00 Z" fill="#bfbfbf" stroke="none"/><path d="M103.50,0.00 A103.5,103.5 0 0 1 0.00,103.50 L0.00,91.50 A91.5,91.5 0 0 0 91.50,0.00 Z" fill="#bfbfbf" stroke="none"/></g>
<circle r="115"/><circle r="108.7"/><circle r="91.5"/>
<ellipse cx="-9.5" cy="0" rx="123" ry="113"/>
<circle cx="-1" r="110"/>
<circle cx="4" cy="2" r="111.5" stroke-opacity=".7"/>
<path d="M-115,-62 C-60,-110 30,-100 95,-78 M-115,-62 C-70,-78 -30,-92 10,-92 C50,-92 90,-84 122,-66" stroke-opacity=".8"/>
<circle r="78.3" stroke="#777" stroke-width="1.1"/><circle r="76.5" stroke-opacity=".7"/><circle r="72"/><circle r="68"/>
<circle r="15" stroke="#c2c2c2" stroke-width="0.6"/>
<circle r="20" stroke="#c2c2c2" stroke-width="0.6"/>
<circle r="25" stroke="#c2c2c2" stroke-width="0.6"/>
<circle r="30" stroke="#c2c2c2" stroke-width="0.6"/>
<circle r="35" stroke="#c2c2c2" stroke-width="0.6"/>
<circle r="40" stroke="#c2c2c2" stroke-width="0.6"/>
<circle r="45" stroke="#c2c2c2" stroke-width="0.6"/>
<circle r="50" stroke="#c2c2c2" stroke-width="0.6"/>
<circle r="55" stroke="#c2c2c2" stroke-width="0.6"/>
<g transform="rotate(0)">
<path d="M-13.5,-58.5 L13.5,-58.5 Q15.8,-58.5 15.2,-56 L12,-44.5 Q11.5,-42.8 9.8,-42.8 L-9.8,-42.8 Q-11.5,-42.8 -12,-44.5 L-15.2,-56 Q-15.8,-58.5 -13.5,-58.5 Z" stroke="#6e6e6e" stroke-width="1"/>
<path d="M-11.5,-56 L11.5,-56 L9,-46 L-9,-46 Z" stroke-opacity=".7"/>
<path d="M-12,-43 L-6,-13 M12,-43 L6,-13 M-16,-60 L-17.5,-64 M16,-60 L17.5,-64" stroke-opacity=".8"/>
<rect x="-2.8" y="-19.5" width="5.6" height="2.6" rx="1.3" stroke="#888"/>
</g>
<g transform="rotate(36)">
<path d="M0,-65 C12,-65 21,-62 22,-55 C23,-47 13,-35 0,-33 C-13,-35 -23,-47 -22,-55 C-21,-62 -12,-65 0,-65 Z" stroke-opacity=".75"/>
</g>
<g transform="rotate(180)">
<circle cx="0" cy="-25" r="5.2" stroke="#777"/><circle cx="0" cy="-25" r="3" stroke="#888"/>
</g>
<g transform="rotate(72)">
<path d="M-13.5,-58.5 L13.5,-58.5 Q15.8,-58.5 15.2,-56 L12,-44.5 Q11.5,-42.8 9.8,-42.8 L-9.8,-42.8 Q-11.5,-42.8 -12,-44.5 L-15.2,-56 Q-15.8,-58.5 -13.5,-58.5 Z" stroke="#6e6e6e" stroke-width="1"/>
<path d="M-11.5,-56 L11.5,-56 L9,-46 L-9,-46 Z" stroke-opacity=".7"/>
<path d="M-12,-43 L-6,-13 M12,-43 L6,-13 M-16,-60 L-17.5,-64 M16,-60 L17.5,-64" stroke-opacity=".8"/>
<rect x="-2.8" y="-19.5" width="5.6" height="2.6" rx="1.3" stroke="#888"/>
</g>
<g transform="rotate(108)">
<path d="M0,-65 C12,-65 21,-62 22,-55 C23,-47 13,-35 0,-33 C-13,-35 -23,-47 -22,-55 C-21,-62 -12,-65 0,-65 Z" stroke-opacity=".75"/>
</g>
<g transform="rotate(252)">
<circle cx="0" cy="-25" r="5.2" stroke="#777"/><circle cx="0" cy="-25" r="3" stroke="#888"/>
</g>
<g transform="rotate(144)">
<path d="M-13.5,-58.5 L13.5,-58.5 Q15.8,-58.5 15.2,-56 L12,-44.5 Q11.5,-42.8 9.8,-42.8 L-9.8,-42.8 Q-11.5,-42.8 -12,-44.5 L-15.2,-56 Q-15.8,-58.5 -13.5,-58.5 Z" stroke="#6e6e6e" stroke-width="1"/>
<path d="M-11.5,-56 L11.5,-56 L9,-46 L-9,-46 Z" stroke-opacity=".7"/>
<path d="M-12,-43 L-6,-13 M12,-43 L6,-13 M-16,-60 L-17.5,-64 M16,-60 L17.5,-64" stroke-opacity=".8"/>
<rect x="-2.8" y="-19.5" width="5.6" height="2.6" rx="1.3" stroke="#888"/>
</g>
<g transform="rotate(180)">
<path d="M0,-65 C12,-65 21,-62 22,-55 C23,-47 13,-35 0,-33 C-13,-35 -23,-47 -22,-55 C-21,-62 -12,-65 0,-65 Z" stroke-opacity=".75"/>
</g>
<g transform="rotate(324)">
<circle cx="0" cy="-25" r="5.2" stroke="#777"/><circle cx="0" cy="-25" r="3" stroke="#888"/>
</g>
<g transform="rotate(216)">
<path d="M-13.5,-58.5 L13.5,-58.5 Q15.8,-58.5 15.2,-56 L12,-44.5 Q11.5,-42.8 9.8,-42.8 L-9.8,-42.8 Q-11.5,-42.8 -12,-44.5 L-15.2,-56 Q-15.8,-58.5 -13.5,-58.5 Z" stroke="#6e6e6e" stroke-width="1"/>
<path d="M-11.5,-56 L11.5,-56 L9,-46 L-9,-46 Z" stroke-opacity=".7"/>
<path d="M-12,-43 L-6,-13 M12,-43 L6,-13 M-16,-60 L-17.5,-64 M16,-60 L17.5,-64" stroke-opacity=".8"/>
<rect x="-2.8" y="-19.5" width="5.6" height="2.6" rx="1.3" stroke="#888"/>
</g>
<g transform="rotate(252)">
<path d="M0,-65 C12,-65 21,-62 22,-55 C23,-47 13,-35 0,-33 C-13,-35 -23,-47 -22,-55 C-21,-62 -12,-65 0,-65 Z" stroke-opacity=".75"/>
</g>
<g transform="rotate(396)">
<circle cx="0" cy="-25" r="5.2" stroke="#777"/><circle cx="0" cy="-25" r="3" stroke="#888"/>
</g>
<g transform="rotate(288)">
<path d="M-13.5,-58.5 L13.5,-58.5 Q15.8,-58.5 15.2,-56 L12,-44.5 Q11.5,-42.8 9.8,-42.8 L-9.8,-42.8 Q-11.5,-42.8 -12,-44.5 L-15.2,-56 Q-15.8,-58.5 -13.5,-58.5 Z" stroke="#6e6e6e" stroke-width="1"/>
<path d="M-11.5,-56 L11.5,-56 L9,-46 L-9,-46 Z" stroke-opacity=".7"/>
<path d="M-12,-43 L-6,-13 M12,-43 L6,-13 M-16,-60 L-17.5,-64 M16,-60 L17.5,-64" stroke-opacity=".8"/>
<rect x="-2.8" y="-19.5" width="5.6" height="2.6" rx="1.3" stroke="#888"/>
</g>
<g transform="rotate(324)">
<path d="M0,-65 C12,-65 21,-62 22,-55 C23,-47 13,-35 0,-33 C-13,-35 -23,-47 -22,-55 C-21,-62 -12,-65 0,-65 Z" stroke-opacity=".75"/>
</g>
<g transform="rotate(468)">
<circle cx="0" cy="-25" r="5.2" stroke="#777"/><circle cx="0" cy="-25" r="3" stroke="#888"/>
</g>
<circle r="13.6" stroke="#666" stroke-width="1.2"/><circle r="10.5"/><path d="M-4,-5 Q0,-6 4,-5 L4,2 Q3.5,5 0,6.5 Q-3.5,5 -4,2 Z" stroke-width="0.6"/><path d="M-4,-2.5h8M0,-2.5V6" stroke-width="0.5"/>
</g>
<rect x="1397.5" y="639.5" width="7.8" height="11" fill="#fff" stroke="#a8a8a8" stroke-width="0.8"/><path d="M1397.5,645h7.8" stroke="#b0b0b0" stroke-width="0.8"/>
</svg>
<div id="rulerh"><svg width="1562" height="23" style="position:absolute;left:0;top:0"><rect x="22" y="21" width="1540" height="1" fill="#6d6d6d"/><rect x="24.56" y="16" width="1" height="5" fill="#8a8a8a"/><rect x="33.00" y="1" width="1" height="21" fill="#7d7d7d"/><rect x="41.44" y="16" width="1" height="5" fill="#8a8a8a"/><rect x="49.88" y="16" width="1" height="5" fill="#8a8a8a"/><rect x="58.31" y="16" width="1" height="5" fill="#8a8a8a"/><rect x="66.75" y="16" width="1" height="5" fill="#8a8a8a"/><rect x="75.19" y="16" width="1" height="5" fill="#8a8a8a"/><rect x="83.62" y="16" width="1" height="5" fill="#8a8a8a"/><rect x="92.06" y="16" width="1" height="5" fill="#8a8a8a"/><rect x="100.50" y="16" width="1" height="5" fill="#8a8a8a"/><rect x="108.94" y="16" width="1" height="5" fill="#8a8a8a"/><rect x="117.38" y="1" width="1" height="21" fill="#7d7d7d"/><rect x="125.81" y="16" width="1" height="5" fill="#8a8a8a"/><rect x="134.25" y="16" width="1" height="5" fill="#8a8a8a"/><rect x="142.69" y="16" width="1" height="5" fill="#8a8a8a"/><rect x="151.12" y="16" width="1" height="5" fill="#8a8a8a"/><rect x="159.56" y="16" width="1" height="5" fill="#8a8a8a"/><rect x="168.00" y="16" width="1" height="5" fill="#8a8a8a"/><rect x="176.44" y="16" width="1" height="5" fill="#8a8a8a"/><rect x="184.88" y="16" width="1" height="5" fill="#8a8a8a"/><rect x="193.31" y="16" width="1" height="5" fill="#8a8a8a"/><rect x="201.75" y="1" width="1" height="21" fill="#7d7d7d"/><rect x="210.19" y="16" width="1" height="5" fill="#8a8a8a"/><rect x="218.62" y="16" width="1" height="5" fill="#8a8a8a"/><rect x="227.06" y="16" width="1" height="5" fill="#8a8a8a"/><rect x="235.50" y="16" width="1" height="5" fill="#8a8a8a"/><rect x="243.94" y="16" width="1" height="5" fill="#8a8a8a"/><rect x="252.38" y="16" width="1" height="5" fill="#8a8a8a"/><rect x="260.81" y="16" width="1" height="5" fill="#8a8a8a"/><rect x="269.25" y="16" width="1" height="5" fill="#8a8a8a"/><rect x="277.69" y="16" width="1" height="5" fill="#8a8a8a"/><rect x="286.12" y="1" width="1" height="21" fill="#7d7d7d"/><rect x="294.56" y="16" width="1" height="5" fill="#8a8a8a"/><rect x="303.00" y="16" width="1" height="5" fill="#8a8a8a"/><rect x="311.44" y="16" width="1" height="5" fill="#8a8a8a"/><rect x="319.88" y="16" width="1" height="5" fill="#8a8a8a"/><rect x="328.31" y="16" width="1" height="5" fill="#8a8a8a"/><rect x="336.75" y="16" width="1" height="5" fill="#8a8a8a"/><rect x="345.19" y="16" width="1" height="5" fill="#8a8a8a"/><rect x="353.62" y="16" width="1" height="5" fill="#8a8a8a"/><rect x="362.06" y="16" width="1" height="5" fill="#8a8a8a"/><rect x="370.50" y="1" width="1" height="21" fill="#7d7d7d"/><rect x="378.94" y="16" width="1" height="5" fill="#8a8a8a"/><rect x="387.38" y="16" width="1" height="5" fill="#8a8a8a"/><rect x="395.81" y="16" width="1" height="5" fill="#8a8a8a"/><rect x="404.25" y="16" width="1" height="5" fill="#8a8a8a"/><rect x="412.69" y="16" width="1" height="5" fill="#8a8a8a"/><rect x="421.12" y="16" width="1" height="5" fill="#8a8a8a"/><rect x="429.56" y="16" width="1" height="5" fill="#8a8a8a"/><rect x="438.00" y="16" width="1" height="5" fill="#8a8a8a"/><rect x="446.44" y="16" width="1" height="5" fill="#8a8a8a"/><rect x="454.88" y="1" width="1" height="21" fill="#7d7d7d"/><rect x="463.31" y="16" width="1" height="5" fill="#8a8a8a"/><rect x="471.75" y="16" width="1" height="5" fill="#8a8a8a"/><rect x="480.19" y="16" width="1" height="5" fill="#8a8a8a"/><rect x="488.62" y="16" width="1" height="5" fill="#8a8a8a"/><rect x="497.06" y="16" width="1" height="5" fill="#8a8a8a"/><rect x="505.50" y="16" width="1" height="5" fill="#8a8a8a"/><rect x="513.94" y="16" width="1" height="5" fill="#8a8a8a"/><rect x="522.38" y="16" width="1" height="5" fill="#8a8a8a"/><rect x="530.81" y="16" width="1" height="5" fill="#8a8a8a"/><rect x="539.25" y="1" width="1" height="21" fill="#7d7d7d"/><rect x="547.69" y="16" width="1" height="5" fill="#8a8a8a"/><rect x="556.12" y="16" width="1" height="5" fill="#8a8a8a"/><rect x="564.56" y="16" width="1" height="5" fill="#8a8a8a"/><rect x="573.00" y="16" width="1" height="5" fill="#8a8a8a"/><rect x="581.44" y="16" width="1" height="5" fill="#8a8a8a"/><rect x="589.88" y="16" width="1" height="5" fill="#8a8a8a"/><rect x="598.31" y="16" width="1" height="5" fill="#8a8a8a"/><rect x="606.75" y="16" width="1" height="5" fill="#8a8a8a"/><rect x="615.19" y="16" width="1" height="5" fill="#8a8a8a"/><rect x="623.62" y="1" width="1" height="21" fill="#7d7d7d"/><rect x="632.06" y="16" width="1" height="5" fill="#8a8a8a"/><rect x="640.50" y="16" width="1" height="5" fill="#8a8a8a"/><rect x="648.94" y="16" width="1" height="5" fill="#8a8a8a"/><rect x="657.38" y="16" width="1" height="5" fill="#8a8a8a"/><rect x="665.81" y="16" width="1" height="5" fill="#8a8a8a"/><rect x="674.25" y="16" width="1" height="5" fill="#8a8a8a"/><rect x="682.69" y="16" width="1" height="5" fill="#8a8a8a"/><rect x="691.12" y="16" width="1" height="5" fill="#8a8a8a"/><rect x="699.56" y="16" width="1" height="5" fill="#8a8a8a"/><rect x="708.00" y="1" width="1" height="21" fill="#7d7d7d"/><rect x="716.44" y="16" width="1" height="5" fill="#8a8a8a"/><rect x="724.88" y="16" width="1" height="5" fill="#8a8a8a"/><rect x="733.31" y="16" width="1" height="5" fill="#8a8a8a"/><rect x="741.75" y="16" width="1" height="5" fill="#8a8a8a"/><rect x="750.19" y="16" width="1" height="5" fill="#8a8a8a"/><rect x="758.62" y="16" width="1" height="5" fill="#8a8a8a"/><rect x="767.06" y="16" width="1" height="5" fill="#8a8a8a"/><rect x="775.50" y="16" width="1" height="5" fill="#8a8a8a"/><rect x="783.94" y="16" width="1" height="5" fill="#8a8a8a"/><rect x="792.38" y="1" width="1" height="21" fill="#7d7d7d"/><rect x="800.81" y="16" width="1" height="5" fill="#8a8a8a"/><rect x="809.25" y="16" width="1" height="5" fill="#8a8a8a"/><rect x="817.69" y="16" width="1" height="5" fill="#8a8a8a"/><rect x="826.12" y="16" width="1" height="5" fill="#8a8a8a"/><rect x="834.56" y="16" width="1" height="5" fill="#8a8a8a"/><rect x="843.00" y="16" width="1" height="5" fill="#8a8a8a"/><rect x="851.44" y="16" width="1" height="5" fill="#8a8a8a"/><rect x="859.88" y="16" width="1" height="5" fill="#8a8a8a"/><rect x="868.31" y="16" width="1" height="5" fill="#8a8a8a"/><rect x="876.75" y="1" width="1" height="21" fill="#7d7d7d"/><rect x="885.19" y="16" width="1" height="5" fill="#8a8a8a"/><rect x="893.62" y="16" width="1" height="5" fill="#8a8a8a"/><rect x="902.06" y="16" width="1" height="5" fill="#8a8a8a"/><rect x="910.50" y="16" width="1" height="5" fill="#8a8a8a"/><rect x="918.94" y="16" width="1" height="5" fill="#8a8a8a"/><rect x="927.38" y="16" width="1" height="5" fill="#8a8a8a"/><rect x="935.81" y="16" width="1" height="5" fill="#8a8a8a"/><rect x="944.25" y="16" width="1" height="5" fill="#8a8a8a"/><rect x="952.69" y="16" width="1" height="5" fill="#8a8a8a"/><rect x="961.12" y="1" width="1" height="21" fill="#7d7d7d"/><rect x="969.56" y="16" width="1" height="5" fill="#8a8a8a"/><rect x="978.00" y="16" width="1" height="5" fill="#8a8a8a"/><rect x="986.44" y="16" width="1" height="5" fill="#8a8a8a"/><rect x="994.88" y="16" width="1" height="5" fill="#8a8a8a"/><rect x="1003.31" y="16" width="1" height="5" fill="#8a8a8a"/><rect x="1011.75" y="16" width="1" height="5" fill="#8a8a8a"/><rect x="1020.19" y="16" width="1" height="5" fill="#8a8a8a"/><rect x="1028.62" y="16" width="1" height="5" fill="#8a8a8a"/><rect x="1037.06" y="16" width="1" height="5" fill="#8a8a8a"/><rect x="1045.50" y="1" width="1" height="21" fill="#7d7d7d"/><rect x="1053.94" y="16" width="1" height="5" fill="#8a8a8a"/><rect x="1062.38" y="16" width="1" height="5" fill="#8a8a8a"/><rect x="1070.81" y="16" width="1" height="5" fill="#8a8a8a"/><rect x="1079.25" y="16" width="1" height="5" fill="#8a8a8a"/><rect x="1087.69" y="16" width="1" height="5" fill="#8a8a8a"/><rect x="1096.12" y="16" width="1" height="5" fill="#8a8a8a"/><rect x="1104.56" y="16" width="1" height="5" fill="#8a8a8a"/><rect x="1113.00" y="16" width="1" height="5" fill="#8a8a8a"/><rect x="1121.44" y="16" width="1" height="5" fill="#8a8a8a"/><rect x="1129.88" y="1" width="1" height="21" fill="#7d7d7d"/><rect x="1138.31" y="16" width="1" height="5" fill="#8a8a8a"/><rect x="1146.75" y="16" width="1" height="5" fill="#8a8a8a"/><rect x="1155.19" y="16" width="1" height="5" fill="#8a8a8a"/><rect x="1163.62" y="16" width="1" height="5" fill="#8a8a8a"/><rect x="1172.06" y="16" width="1" height="5" fill="#8a8a8a"/><rect x="1180.50" y="16" width="1" height="5" fill="#8a8a8a"/><rect x="1188.94" y="16" width="1" height="5" fill="#8a8a8a"/><rect x="1197.38" y="16" width="1" height="5" fill="#8a8a8a"/><rect x="1205.81" y="16" width="1" height="5" fill="#8a8a8a"/><rect x="1214.25" y="1" width="1" height="21" fill="#7d7d7d"/><rect x="1222.69" y="16" width="1" height="5" fill="#8a8a8a"/><rect x="1231.12" y="16" width="1" height="5" fill="#8a8a8a"/><rect x="1239.56" y="16" width="1" height="5" fill="#8a8a8a"/><rect x="1248.00" y="16" width="1" height="5" fill="#8a8a8a"/><rect x="1256.44" y="16" width="1" height="5" fill="#8a8a8a"/><rect x="1264.88" y="16" width="1" height="5" fill="#8a8a8a"/><rect x="1273.31" y="16" width="1" height="5" fill="#8a8a8a"/><rect x="1281.75" y="16" width="1" height="5" fill="#8a8a8a"/><rect x="1290.19" y="16" width="1" height="5" fill="#8a8a8a"/><rect x="1298.62" y="1" width="1" height="21" fill="#7d7d7d"/><rect x="1307.06" y="16" width="1" height="5" fill="#8a8a8a"/><rect x="1315.50" y="16" width="1" height="5" fill="#8a8a8a"/><rect x="1323.94" y="16" width="1" height="5" fill="#8a8a8a"/><rect x="1332.38" y="16" width="1" height="5" fill="#8a8a8a"/><rect x="1340.81" y="16" width="1" height="5" fill="#8a8a8a"/><rect x="1349.25" y="16" width="1" height="5" fill="#8a8a8a"/><rect x="1357.69" y="16" width="1" height="5" fill="#8a8a8a"/><rect x="1366.12" y="16" width="1" height="5" fill="#8a8a8a"/><rect x="1374.56" y="16" width="1" height="5" fill="#8a8a8a"/><rect x="1383.00" y="1" width="1" height="21" fill="#7d7d7d"/><rect x="1391.44" y="16" width="1" height="5" fill="#8a8a8a"/><rect x="1399.88" y="16" width="1" height="5" fill="#8a8a8a"/><rect x="1408.31" y="16" width="1" height="5" fill="#8a8a8a"/><rect x="1416.75" y="16" width="1" height="5" fill="#8a8a8a"/><rect x="1425.19" y="16" width="1" height="5" fill="#8a8a8a"/><rect x="1433.62" y="16" width="1" height="5" fill="#8a8a8a"/><rect x="1442.06" y="16" width="1" height="5" fill="#8a8a8a"/><rect x="1450.50" y="16" width="1" height="5" fill="#8a8a8a"/><rect x="1458.94" y="16" width="1" height="5" fill="#8a8a8a"/><rect x="1467.38" y="1" width="1" height="21" fill="#7d7d7d"/><rect x="1475.81" y="16" width="1" height="5" fill="#8a8a8a"/><rect x="1484.25" y="16" width="1" height="5" fill="#8a8a8a"/><rect x="1492.69" y="16" width="1" height="5" fill="#8a8a8a"/><rect x="1501.12" y="16" width="1" height="5" fill="#8a8a8a"/><rect x="1509.56" y="16" width="1" height="5" fill="#8a8a8a"/><rect x="1518.00" y="16" width="1" height="5" fill="#8a8a8a"/><rect x="1526.44" y="16" width="1" height="5" fill="#8a8a8a"/><rect x="1534.88" y="16" width="1" height="5" fill="#8a8a8a"/><rect x="1543.31" y="16" width="1" height="5" fill="#8a8a8a"/><rect x="1551.75" y="1" width="1" height="21" fill="#7d7d7d"/><rect x="1560.19" y="16" width="1" height="5" fill="#8a8a8a"/></svg><div class="rl" style="left:36.3px">100</div><div class="rl" style="left:120.7px">200</div><div class="rl" style="left:205.1px">300</div><div class="rl" style="left:289.4px">400</div><div class="rl" style="left:373.8px">500</div><div class="rl" style="left:458.2px">600</div><div class="rl" style="left:542.5px">700</div><div class="rl" style="left:626.9px">800</div><div class="rl" style="left:711.3px">900</div><div class="rl" style="left:795.7px;letter-spacing:-0.25px">1.000</div><div class="rl" style="left:880.0px;letter-spacing:-0.25px">1.100</div><div class="rl" style="left:964.4px;letter-spacing:-0.25px">1.200</div><div class="rl" style="left:1048.8px;letter-spacing:-0.25px">1.300</div><div class="rl" style="left:1133.2px;letter-spacing:-0.25px">1.400</div><div class="rl" style="left:1217.5px;letter-spacing:-0.25px">1.500</div><div class="rl" style="left:1301.9px;letter-spacing:-0.25px">1.600</div><div class="rl" style="left:1386.3px;letter-spacing:-0.25px">1.700</div><div class="rl" style="left:1470.7px;letter-spacing:-0.25px">1.800</div><div class="rl" style="left:1555.0px;letter-spacing:-0.25px">1.900</div><div class="rl" style="left:317.2px;background:#262626;padding:0 3px;top:1px;height:13px;line-height:13px">435</div><div class="rl" style="left:1157.5px;background:#262626;padding:0 3px;top:1px;height:13px;line-height:13px">1.431</div><div class="abs" style="left:1153.2px;top:0px;width:4px;height:22px;background:#1c4f9c;opacity:.55"></div><div class="abs" style="left:0;top:0;width:22px;height:23px;background:#000;border-right:1px solid #6d6d6d;border-bottom:1px solid #6d6d6d"></div><svg class="abs" style="left:8px;top:7px" width="8" height="10" viewBox="0 0 8 10"><rect x="0.5" y="4.2" width="7" height="5.3" rx="0.8" fill="#c8c8c8"/><path d="M2 4.5V2.8a2 2 0 0 1 4 0V4.5" fill="none" stroke="#c8c8c8" stroke-width="1.2"/></svg></div>
<div id="rulerv"><svg width="23" height="1000" style="position:absolute;left:0;top:0"><rect x="22" y="0" width="1" height="1000" fill="#6d6d6d"/><rect x="16" y="0.88" width="6" height="1" fill="#8a8a8a"/><rect x="16" y="9.31" width="6" height="1" fill="#8a8a8a"/><rect x="16" y="17.75" width="6" height="1" fill="#8a8a8a"/><rect x="16" y="26.19" width="6" height="1" fill="#8a8a8a"/><rect x="16" y="34.62" width="6" height="1" fill="#8a8a8a"/><rect x="16" y="43.06" width="6" height="1" fill="#8a8a8a"/><rect x="1" y="51.50" width="21" height="1" fill="#7d7d7d"/><rect x="16" y="59.94" width="6" height="1" fill="#8a8a8a"/><rect x="16" y="68.38" width="6" height="1" fill="#8a8a8a"/><rect x="16" y="76.81" width="6" height="1" fill="#8a8a8a"/><rect x="16" y="85.25" width="6" height="1" fill="#8a8a8a"/><rect x="16" y="93.69" width="6" height="1" fill="#8a8a8a"/><rect x="16" y="102.12" width="6" height="1" fill="#8a8a8a"/><rect x="16" y="110.56" width="6" height="1" fill="#8a8a8a"/><rect x="16" y="119.00" width="6" height="1" fill="#8a8a8a"/><rect x="16" y="127.44" width="6" height="1" fill="#8a8a8a"/><rect x="1" y="135.88" width="21" height="1" fill="#7d7d7d"/><rect x="16" y="144.31" width="6" height="1" fill="#8a8a8a"/><rect x="16" y="152.75" width="6" height="1" fill="#8a8a8a"/><rect x="16" y="161.19" width="6" height="1" fill="#8a8a8a"/><rect x="16" y="169.62" width="6" height="1" fill="#8a8a8a"/><rect x="16" y="178.06" width="6" height="1" fill="#8a8a8a"/><rect x="16" y="186.50" width="6" height="1" fill="#8a8a8a"/><rect x="16" y="194.94" width="6" height="1" fill="#8a8a8a"/><rect x="16" y="203.38" width="6" height="1" fill="#8a8a8a"/><rect x="16" y="211.81" width="6" height="1" fill="#8a8a8a"/><rect x="1" y="220.25" width="21" height="1" fill="#7d7d7d"/><rect x="16" y="228.69" width="6" height="1" fill="#8a8a8a"/><rect x="16" y="237.12" width="6" height="1" fill="#8a8a8a"/><rect x="16" y="245.56" width="6" height="1" fill="#8a8a8a"/><rect x="16" y="254.00" width="6" height="1" fill="#8a8a8a"/><rect x="16" y="262.44" width="6" height="1" fill="#8a8a8a"/><rect x="16" y="270.88" width="6" height="1" fill="#8a8a8a"/><rect x="16" y="279.31" width="6" height="1" fill="#8a8a8a"/><rect x="16" y="287.75" width="6" height="1" fill="#8a8a8a"/><rect x="16" y="296.19" width="6" height="1" fill="#8a8a8a"/><rect x="1" y="304.62" width="21" height="1" fill="#7d7d7d"/><rect x="16" y="313.06" width="6" height="1" fill="#8a8a8a"/><rect x="16" y="321.50" width="6" height="1" fill="#8a8a8a"/><rect x="16" y="329.94" width="6" height="1" fill="#8a8a8a"/><rect x="16" y="338.38" width="6" height="1" fill="#8a8a8a"/><rect x="16" y="346.81" width="6" height="1" fill="#8a8a8a"/><rect x="16" y="355.25" width="6" height="1" fill="#8a8a8a"/><rect x="16" y="363.69" width="6" height="1" fill="#8a8a8a"/><rect x="16" y="372.12" width="6" height="1" fill="#8a8a8a"/><rect x="16" y="380.56" width="6" height="1" fill="#8a8a8a"/><rect x="1" y="389.00" width="21" height="1" fill="#7d7d7d"/><rect x="16" y="397.44" width="6" height="1" fill="#8a8a8a"/><rect x="16" y="405.88" width="6" height="1" fill="#8a8a8a"/><rect x="16" y="414.31" width="6" height="1" fill="#8a8a8a"/><rect x="16" y="422.75" width="6" height="1" fill="#8a8a8a"/><rect x="16" y="431.19" width="6" height="1" fill="#8a8a8a"/><rect x="16" y="439.62" width="6" height="1" fill="#8a8a8a"/><rect x="16" y="448.06" width="6" height="1" fill="#8a8a8a"/><rect x="16" y="456.50" width="6" height="1" fill="#8a8a8a"/><rect x="16" y="464.94" width="6" height="1" fill="#8a8a8a"/><rect x="1" y="473.38" width="21" height="1" fill="#7d7d7d"/><rect x="16" y="481.81" width="6" height="1" fill="#8a8a8a"/><rect x="16" y="490.25" width="6" height="1" fill="#8a8a8a"/><rect x="16" y="498.69" width="6" height="1" fill="#8a8a8a"/><rect x="16" y="507.12" width="6" height="1" fill="#8a8a8a"/><rect x="16" y="515.56" width="6" height="1" fill="#8a8a8a"/><rect x="16" y="524.00" width="6" height="1" fill="#8a8a8a"/><rect x="16" y="532.44" width="6" height="1" fill="#8a8a8a"/><rect x="16" y="540.88" width="6" height="1" fill="#8a8a8a"/><rect x="16" y="549.31" width="6" height="1" fill="#8a8a8a"/><rect x="1" y="557.75" width="21" height="1" fill="#7d7d7d"/><rect x="16" y="566.19" width="6" height="1" fill="#8a8a8a"/><rect x="16" y="574.62" width="6" height="1" fill="#8a8a8a"/><rect x="16" y="583.06" width="6" height="1" fill="#8a8a8a"/><rect x="16" y="591.50" width="6" height="1" fill="#8a8a8a"/><rect x="16" y="599.94" width="6" height="1" fill="#8a8a8a"/><rect x="16" y="608.38" width="6" height="1" fill="#8a8a8a"/><rect x="16" y="616.81" width="6" height="1" fill="#8a8a8a"/><rect x="16" y="625.25" width="6" height="1" fill="#8a8a8a"/><rect x="16" y="633.69" width="6" height="1" fill="#8a8a8a"/><rect x="1" y="642.12" width="21" height="1" fill="#7d7d7d"/><rect x="16" y="650.56" width="6" height="1" fill="#8a8a8a"/><rect x="16" y="659.00" width="6" height="1" fill="#8a8a8a"/><rect x="16" y="667.44" width="6" height="1" fill="#8a8a8a"/><rect x="16" y="675.88" width="6" height="1" fill="#8a8a8a"/><rect x="16" y="684.31" width="6" height="1" fill="#8a8a8a"/><rect x="16" y="692.75" width="6" height="1" fill="#8a8a8a"/><rect x="16" y="701.19" width="6" height="1" fill="#8a8a8a"/><rect x="16" y="709.62" width="6" height="1" fill="#8a8a8a"/><rect x="16" y="718.06" width="6" height="1" fill="#8a8a8a"/><rect x="1" y="726.50" width="21" height="1" fill="#7d7d7d"/><rect x="16" y="734.94" width="6" height="1" fill="#8a8a8a"/><rect x="16" y="743.38" width="6" height="1" fill="#8a8a8a"/><rect x="16" y="751.81" width="6" height="1" fill="#8a8a8a"/><rect x="16" y="760.25" width="6" height="1" fill="#8a8a8a"/><rect x="16" y="768.69" width="6" height="1" fill="#8a8a8a"/><rect x="16" y="777.12" width="6" height="1" fill="#8a8a8a"/><rect x="16" y="785.56" width="6" height="1" fill="#8a8a8a"/><rect x="16" y="794.00" width="6" height="1" fill="#8a8a8a"/><rect x="16" y="802.44" width="6" height="1" fill="#8a8a8a"/><rect x="1" y="810.88" width="21" height="1" fill="#7d7d7d"/><rect x="16" y="819.31" width="6" height="1" fill="#8a8a8a"/><rect x="16" y="827.75" width="6" height="1" fill="#8a8a8a"/><rect x="16" y="836.19" width="6" height="1" fill="#8a8a8a"/><rect x="16" y="844.62" width="6" height="1" fill="#8a8a8a"/><rect x="16" y="853.06" width="6" height="1" fill="#8a8a8a"/><rect x="16" y="861.50" width="6" height="1" fill="#8a8a8a"/><rect x="16" y="869.94" width="6" height="1" fill="#8a8a8a"/><rect x="16" y="878.38" width="6" height="1" fill="#8a8a8a"/><rect x="16" y="886.81" width="6" height="1" fill="#8a8a8a"/><rect x="1" y="895.25" width="21" height="1" fill="#7d7d7d"/><rect x="16" y="903.69" width="6" height="1" fill="#8a8a8a"/><rect x="16" y="912.12" width="6" height="1" fill="#8a8a8a"/><rect x="16" y="920.56" width="6" height="1" fill="#8a8a8a"/><rect x="16" y="929.00" width="6" height="1" fill="#8a8a8a"/><rect x="16" y="937.44" width="6" height="1" fill="#8a8a8a"/><rect x="16" y="945.88" width="6" height="1" fill="#8a8a8a"/><rect x="16" y="954.31" width="6" height="1" fill="#8a8a8a"/><rect x="16" y="962.75" width="6" height="1" fill="#8a8a8a"/><rect x="16" y="971.19" width="6" height="1" fill="#8a8a8a"/><rect x="1" y="979.62" width="21" height="1" fill="#7d7d7d"/><rect x="16" y="988.06" width="6" height="1" fill="#8a8a8a"/><rect x="16" y="996.50" width="6" height="1" fill="#8a8a8a"/><rect x="0" y="561" width="23" height="7" fill="#0d3f86"/></svg><div class="rlv" style="top:48.5px">0</div><div class="rlv" style="top:132.9px">100</div><div class="rlv" style="top:217.2px">200</div><div class="rlv" style="top:301.6px">300</div><div class="rlv" style="top:386.0px">400</div><div class="rlv" style="top:470.4px">500</div><div class="rlv" style="top:554.8px">600</div><div class="rlv" style="top:639.1px">700</div><div class="rlv" style="top:723.5px">800</div><div class="rlv" style="top:807.9px">900</div><div class="rlv" style="top:892.2px">1.000</div><div class="rlv" style="top:976.6px">1.100</div><div class="rlv" style="top:673.5px;left:2px;background:#262626;padding:0 2px;height:13px;line-height:13px">739</div></div>
<div class="abs" style="left:562px;top:57px;width:1px;height:1023px;background:#e8262d"></div>
<div class="abs" style="left:1402px;top:57px;width:1px;height:1023px;background:#e8262d"></div>
<div class="abs" style="left:246px;top:755px;width:1562px;height:1px;background:#e8262d;opacity:.62"></div>
<div id="toolbar">
<div id="title"><svg width="12" height="14" viewBox="0 0 12 14" style="position:absolute;left:-16px;top:0px"><path d="M1 0.5h6.5l3.5 3.5v9.5H1z" fill="#f2f2f2"/><path d="M7.5 0.5v3.5H11" fill="#cfcfcf"/><path d="M3.2 7.2l1.3-1.6h3l1.3 1.6L6 10.6z" fill="#f7a823"/><path d="M3.2 7.2h5.6L6 10.6z" fill="#ea6c0a"/></svg>1969-porsche911.sketch<span> — Edited</span></div>

<div class="tb" style="left:-4px;width:12px"></div>
<div class="tb" style="left:15px;width:39px"><svg width="39" height="19"><path d="M13.5 5v9M9 9.5h9" stroke="#c4c4c6" stroke-width="1.2" fill="none"/><path d="M29 8.5l2.7 2.5 2.7-2.5" stroke="#b0b0b2" stroke-width="1.1" fill="none"/></svg></div>
<div class="tbl" style="left:34.5px">Insert</div>
<div class="tb" style="left:61px;width:39px"><svg width="39" height="19"><path d="M13 4l6 3-6 3-6-3z" fill="#c8c8ca"/><path d="M7 9.2l6 3 6-3M7 11.2l6 3 6-3" stroke="#a8a8aa" stroke-width="0.9" fill="none"/><path d="M28.5 8.5l2.7 2.5 2.7-2.5" stroke="#b0b0b2" stroke-width="1.1" fill="none"/></svg></div>
<div class="tbl" style="left:80px">Data</div>

<div class="tb" style="left:240px;width:38px"><svg width="38" height="19"><path d="M19 3.5l5 6-5 6-5-6z" fill="#c6c6c8"/></svg></div>
<div class="tbl" style="left:259px">Create Symbol</div>

<div class="tb" style="left:422px;width:92px"><div class="div" style="left:46px"></div><svg width="92" height="19"><g fill="#c4c4c6"><rect x="17" y="9.9" width="4.8" height="2.7"/><rect x="24.6" y="9.9" width="4.8" height="2.7"/><rect x="17" y="14.2" width="12.4" height="2.7"/></g><path d="M23.2 13.7V4.6M21.2 6.6l2-2.1 2 2.1" stroke="#c4c4c6" stroke-width="1" fill="none"/><g fill="#c4c4c6"><rect x="62.9" y="5.1" width="13.1" height="2.7"/><rect x="62.9" y="9.4" width="5" height="2.7"/><rect x="71" y="9.4" width="5" height="2.7"/></g><path d="M69.4 7.800V16.800M67.4 14.800l2 2.1 2-2.1" stroke="#c4c4c6" stroke-width="1" fill="none"/></svg></div>
<div class="tbl" style="left:442.5px">Forward</div>
<div class="tbl" style="left:489.5px">Backward</div>

<div class="tb" style="left:520px;width:92px"><div class="div" style="left:47px"></div><svg width="92" height="19"><rect x="16.5" y="3" width="13" height="13" fill="none" stroke="#b4b4b6" stroke-width="0.8"/><rect x="19" y="5.5" width="6.5" height="6.5" fill="#c8c8ca"/><path d="M21.5 13.5h6v-6" fill="none" stroke="#c0c0c2" stroke-width="1"/><g fill="#e2e2e4"><rect x="15.5" y="2" width="2" height="2"/><rect x="28.5" y="2" width="2" height="2"/><rect x="15.5" y="15" width="2" height="2"/><rect x="28.5" y="15" width="2" height="2"/></g>
<circle cx="67.5" cy="7.5" r="3.6" fill="#b9b9bb"/><circle cx="72.5" cy="12" r="3.2" fill="#99999b"/><g fill="#e2e2e4"><rect x="63" y="3" width="1.6" height="1.6"/><rect x="70.5" y="3" width="1.6" height="1.6"/><rect x="63" y="10.5" width="1.6" height="1.6"/><rect x="68.3" y="8" width="1.6" height="1.6"/><rect x="75.5" y="8" width="1.6" height="1.6"/><rect x="75.5" y="15" width="1.6" height="1.6"/><rect x="68.3" y="15" width="1.6" height="1.6"/></g></svg></div>
<div class="tbl" style="left:543.5px">Group</div>
<div class="tbl" style="left:589.5px">Ungroup</div>

<div class="tb" style="left:743px;width:37px"><svg width="37" height="19"><circle cx="18.5" cy="9.5" r="5.5" fill="#909092"/><path d="M14.5 13.5l1-3.2 6-6 2.2 2.2-6 6z" fill="#b4b4b6"/></svg></div>
<div class="tbl" style="left:761.5px">Edit</div>
<div class="tb" style="left:791px;width:37px"><svg width="37" height="19"><path d="M13 14.500V9.500a5.5 5.5 0 0 1 11 0V14.500z" fill="#9a9a9c"/><g fill="#a8a8aa"><rect x="11.5" y="3.5" width="2" height="2"/><rect x="23.5" y="3.5" width="2" height="2"/><rect x="11.5" y="13.8" width="2" height="2"/><rect x="23.5" y="13.8" width="2" height="2"/></g><path d="M12.5 4.500h12v10h-12z" fill="none" stroke="#8a8a8c" stroke-width="0.5" stroke-dasharray="1 1"/></svg></div>
<div class="tbl" style="left:809.5px">Transform</div>
<div class="tb" style="left:839px;width:37px"><svg width="37" height="19"><path d="M16 5a5.5 5.5 0 0 0 -0.5 9M21.5 14a5.5 5.5 0 0 0 0.5-9" stroke="#a9a9ab" stroke-width="2" fill="none"/><path d="M13 12.500l3.5 3 1-4.200zM24.5 6.500l-3.5-3-1 4.200z" fill="#a9a9ab"/></svg></div>
<div class="tbl" style="left:857.5px">Rotate</div>
<div class="tb" style="left:883px;width:37px"><svg width="37" height="19"><circle cx="19.5" cy="9.5" r="5.8" fill="#8c8c8e"/><rect x="12" y="5.5" width="9" height="8" rx="1" fill="#a8a8aa"/></svg></div>
<div class="tbl" style="left:901.5px">Mask</div>
<div class="tb" style="left:927px;width:37px"><svg width="37" height="19"><circle cx="20.5" cy="8" r="5.2" fill="#949496"/><circle cx="17.5" cy="10.5" r="4" fill="#a4a4a6"/><circle cx="15" cy="13" r="2.8" fill="#b4b4b6"/></svg></div>
<div class="tbl" style="left:945.5px">Scale</div>
<div class="tb" style="left:971px;width:37px"><svg width="37" height="19"><circle cx="18.5" cy="9.5" r="5.5" fill="#8e8e90"/><path d="M13.5 13l8-8 2 2-8 8z" fill="#b2b2b4"/></svg></div>
<div class="tbl" style="left:989.5px">Flatten</div>

<div class="tb" style="left:1138px;width:182px"><div class="div" style="left:46px"></div><div class="div" style="left:91px"></div><div class="div" style="left:137px"></div><svg width="182" height="19"><g><rect x="20.8" y="4.9" width="9" height="8.8" rx="1.5" fill="#e0e0e2"/><rect x="17.8" y="8.4" width="8.8" height="8.5" rx="1.5" fill="#e0e0e2"/></g><g><rect x="63" y="8.4" width="8.8" height="8.5" rx="1.5" fill="#d8d8da"/><rect x="66" y="4.9" width="9" height="8.8" rx="1.5" fill="#8e8e90"/></g><g><rect x="107.9" y="8.4" width="8.8" height="8.5" rx="1.5" fill="#8a8a8c"/><rect x="110.9" y="4.9" width="9" height="8.8" rx="1.5" fill="#8e8e90"/><rect x="111.4" y="8.9" width="4.8" height="4.3" rx="0.8" fill="#e4e4e6"/></g><g><rect x="156.7" y="4.9" width="9" height="8.8" rx="1.5" fill="#dcdcde"/><rect x="153.7" y="8.4" width="8.8" height="8.5" rx="1.5" fill="#dcdcde"/><rect x="157.2" y="8.9" width="4.8" height="4.3" rx="0.8" fill="#808183"/></g></svg></div>
<div class="tbl" style="left:1156.5px">Union</div>
<div class="tbl" style="left:1197.5px">Subtract</div>
<div class="tbl" style="left:1243.5px">Intersect</div>
<div class="tbl" style="left:1293.5px">Difference</div>

<div class="tb" style="left:1457px;width:32px"><svg width="32" height="19"><path d="M10.5 11.5a5.5 5.5 0 0 1 11 0z" fill="#b0b0b2"/><rect x="9.5" y="12.5" width="13" height="1.6" fill="#b0b0b2"/><rect x="15" y="4.3" width="2" height="1.5" fill="#b0b0b2"/></svg></div>
<div class="tbl" style="left:1473.5px">Assistants</div>
<div class="tb" style="left:1502px;width:76px"><svg width="76" height="19"><circle cx="11" cy="9.5" r="4.5" fill="#7e7f82"/><rect x="8.5" y="9" width="5" height="1.1" fill="#a9a9ab"/><circle cx="65" cy="9.5" r="4.5" fill="#7e7f82"/><path d="M62.5 9.500h5M65 7v5" stroke="#a9a9ab" stroke-width="1.1"/></svg><div style="position:absolute;left:0;width:76px;top:3px;text-align:center;font-size:11px;color:#9a9b9e;line-height:13px">100%</div></div>
<div class="tbl" style="left:1540.5px">Zoom</div>
<div class="tb" style="left:1585px;width:39px"><svg width="39" height="19"><rect x="7" y="4" width="13" height="11" rx="1.2" fill="#c2c2c4"/><path d="M7 7.2h13M11 7.200v7.8" stroke="#68696c" stroke-width="0.9"/><path d="M28.5 8.5l2.7 2.5 2.7-2.5" stroke="#a0a0a2" stroke-width="1.1" fill="none"/></svg></div>
<div class="tbl" style="left:1604.5px">View</div>
<div class="tb" style="left:1878px;width:37px"><svg width="37" height="19"><path d="M14 4.5l10 5-10 5z" fill="#c2c2c4"/></svg></div>
<div class="tbl" style="left:1896.5px">Preview</div>
</div>

<div id="left"><div class="top"><div class="pill"></div>
<svg class="abs" style="left:206px;top:7px" width="34" height="14"><path d="M6.5 2v10M1.5 7h10" stroke="#c9c9cb" stroke-width="1.1" fill="none"/><path d="M21 9l4-4 4 4" stroke="#c9c9cb" stroke-width="1.2" fill="none"/></svg></div>
<div class="hdr"></div><div class="row" style="top:125px;left:-1px;font-weight:bold;font-size:10.5px;letter-spacing:-0.45px;color:#e8e8e8;height:22px;line-height:22px">che-911</div>
<div class="row" style="top:146.5px"><span style="position:absolute;left:1px">Oval 7</span></div>
<div class="row" style="top:167.6px"><span style="position:absolute;left:1px">Oval 6</span></div>
<div class="row" style="top:188.6px"><span style="position:absolute;left:1px">Oval 5</span></div>
<div class="row" style="top:209.7px"><span style="position:absolute;left:1px">Oval 4</span></div>
<div class="row" style="top:230.8px"><span style="position:absolute;left:1px">Oval 3</span></div>
<div class="row" style="top:251.9px"><span style="position:absolute;left:1px">Oval 2</span></div>
<div class="row" style="top:272.9px"><span style="position:absolute;left:1px">Oval 1</span></div>
<div class="row" style="top:294.0px"><span style="position:absolute;left:-1px">heel base copy 13</span></div>
<div class="row" style="top:315.1px"><span style="position:absolute;left:-1px">heel base copy 12</span></div>
<div class="row" style="top:336.1px"><span style="position:absolute;left:-1px">heel base copy 11</span></div>
<div class="row" style="top:357.2px"><span style="position:absolute;left:-1px">heel base copy 19</span></div>
<div class="row" style="top:378.3px"><span style="position:absolute;left:-1px">heel base copy 18</span></div>
<div class="row" style="top:399.3px"><span style="position:absolute;left:-1px">heel base copy 17</span></div>
<div class="row" style="top:420.4px"><span style="position:absolute;left:-1px">heel base copy 4</span></div>
<div class="row dim" style="top:441.5px"><span style="position:absolute;left:-1px">xture</span><svg class="eye" width="14" height="13" viewBox="0 0 14 13"><path d="M1 6.5C3 3.2 5 2.3 7 2.3s4 .9 6 4.2c-2 3.3-4 4.2-6 4.2s-4-.9-6-4.2z" fill="none" stroke="#8b8c8e" stroke-width="1"/><circle cx="7" cy="6.5" r="2" fill="none" stroke="#8b8c8e" stroke-width="1"/><path d="M2.5 11.5L11.5 1.5" stroke="#8b8c8e" stroke-width="1"/></svg></div>
<div class="row" style="top:462.5px"><span style="position:absolute;left:-1px">heel base copy 5</span></div>
<div class="row" style="top:483.6px"><span style="position:absolute;left:-1px">heel base copy 15</span></div>
<div class="row" style="top:504.7px"><span style="position:absolute;left:-1px">heel base copy 2</span></div>
<div class="row" style="top:525.8px"><span style="position:absolute;left:-1px">ectangle Copy 17</span></div>
<div class="row sel" style="top:546.8px"><span style="position:absolute;left:1px">Rectangle Copy 15</span><svg class="eye" width="14" height="13" viewBox="0 0 14 13"><path d="M1 6.5C3 3.2 5 2.3 7 2.3s4 .9 6 4.2c-2 3.3-4 4.2-6 4.2s-4-.9-6-4.2z" fill="none" stroke="#ffffff" stroke-width="1"/><circle cx="7" cy="6.5" r="2" fill="none" stroke="#ffffff" stroke-width="1"/><path d="M2.5 11.5L11.5 1.5" stroke="#ffffff" stroke-width="1"/></svg></div>
<div class="row dim" style="top:567.9px"><span style="position:absolute;left:-1px">reads</span><svg class="eye" width="14" height="13" viewBox="0 0 14 13"><path d="M1 6.5C3 3.2 5 2.3 7 2.3s4 .9 6 4.2c-2 3.3-4 4.2-6 4.2s-4-.9-6-4.2z" fill="none" stroke="#8b8c8e" stroke-width="1"/><circle cx="7" cy="6.5" r="2" fill="none" stroke="#8b8c8e" stroke-width="1"/><path d="M2.5 11.5L11.5 1.5" stroke="#8b8c8e" stroke-width="1"/></svg></div>
<div class="row" style="top:589.0px"><span style="position:absolute;left:-1px">heel base</span></div>
<div class="row" style="top:610.0px"><span style="position:absolute;left:3px">base copy</span></div>
<div class="row" style="top:631.1px"><span style="position:absolute;left:-1px">el copy</span></div>
<div class="row" style="top:652.2px"><span style="position:absolute;left:-1px">heel</span></div>
<div class="row" style="top:673.2px"><span style="position:absolute;left:-1px">ngle</span></div>
<div class="row" style="top:694.3px"><span style="position:absolute;left:0px"></span></div>
<div class="row dim" style="top:715.4px"><span style="position:absolute;left:-1px">tangle</span><svg class="eye" width="14" height="13" viewBox="0 0 14 13"><path d="M1 6.5C3 3.2 5 2.3 7 2.3s4 .9 6 4.2c-2 3.3-4 4.2-6 4.2s-4-.9-6-4.2z" fill="none" stroke="#8b8c8e" stroke-width="1"/><circle cx="7" cy="6.5" r="2" fill="none" stroke="#8b8c8e" stroke-width="1"/><path d="M2.5 11.5L11.5 1.5" stroke="#8b8c8e" stroke-width="1"/></svg></div>
<div class="row" style="top:736.5px"><span style="position:absolute;left:-1px">el</span></div>
<div class="row" style="top:757.5px"><span style="position:absolute;left:-1px">orsche-line-logo-f</span></div>
<div class="row" style="top:778.6px"><span style="position:absolute;left:-1px">val Copy 2</span></div>
<div class="row" style="top:799.7px"><span style="position:absolute;left:-1px">val</span></div>
<div class="row" style="top:820.7px"><span style="position:absolute;left:-1px">roup 2</span></div>
<div class="row" style="top:841.8px"><span style="position:absolute;left:1px">Group 8 Copy 8</span></div>
<div class="row" style="top:862.9px"><span style="position:absolute;left:8px">Rectangle Copy 11</span></div>
<div class="row" style="top:884.0px"><span style="position:absolute;left:8px">Rectangle</span></div>
<div class="row" style="top:905.0px"><span style="position:absolute;left:8px">Rectangle</span></div>
<div class="row" style="top:926.1px"><span style="position:absolute;left:1px">Group 8 Copy 7</span></div>
<div class="row" style="top:947.2px"><span style="position:absolute;left:8px">Rectangle Copy 11</span></div>
<div class="row" style="top:968.2px"><span style="position:absolute;left:8px">Rectangle</span></div>
<div class="row" style="top:989.3px"><span style="position:absolute;left:8px">Rectangle</span></div>
<div class="row" style="top:1010.4px"><span style="position:absolute;left:1px">Group 8 Copy 6</span></div>
</div>
<div id="right">
<svg class="abs" style="left:0;top:0" width="112" height="22"><g fill="none" stroke="#77787a" stroke-width="1"><path d="M11.5 5v11M18.5 5v11"/><path d="M32 5.5h12M32 15.5h12"/></g><rect x="13.5" y="7" width="3" height="7" fill="#77787a"/><rect x="34" y="8.5" width="8" height="4" fill="#77787a"/><g fill="#6a6b6d"><rect x="54.5" y="6" width="1.5" height="1.5"/><rect x="54.5" y="10" width="1.5" height="1.5"/><rect x="54.5" y="14" width="1.5" height="1.5"/></g><rect x="65.5" y="5.5" width="12" height="11" rx="1.5" fill="none" stroke="#d6d6d8" stroke-width="1.1"/><rect x="67.5" y="8.5" width="8" height="4.5" fill="#d6d6d8"/><rect x="88.5" y="5.5" width="12" height="11" rx="1.5" fill="none" stroke="#d6d6d8" stroke-width="1.1"/><rect x="91" y="8.5" width="7" height="4.5" fill="#d6d6d8"/><path d="M94.5 3.5v15" stroke="#d6d6d8" stroke-width="1"/><rect x="111" y="5.5" width="4" height="11" rx="1.5" fill="none" stroke="#d6d6d8" stroke-width="1.1"/></svg>
<div class="hr" style="top:21px;background:#3a3b3d"></div>
<div class="fld" style="left:8px;top:32px;width:53px">1427<i style="line-height:14px">X</i></div>
<div class="fld" style="left:74px;top:32px;width:50px">603</div>
<div class="fld" style="left:8px;top:58px;width:53px">6<i style="line-height:14px">W</i></div>
<svg class="abs" style="left:64px;top:60px" width="8" height="11" viewBox="0 0 8 11"><rect x="0.5" y="5" width="6" height="5" rx="0.8" fill="#a9aaac"/><path d="M2 5V3a1.8 1.8 0 0 1 3.6-.3" fill="none" stroke="#a9aaac" stroke-width="1.1"/></svg>
<div class="fld" style="left:74px;top:58px;width:50px">8</div>
<div class="hr" style="top:84px"></div>
<div class="lab" style="left:8px;top:93px;line-height:12px">Radius (Round Corners)</div>
<div class="abs" style="left:12px;top:111px;width:110px;height:1px;background:#555658"></div>
<div class="abs" style="left:8px;top:107px;width:9px;height:9px;border-radius:5px;background:#8b8c8e"></div>
<div class="hr" style="top:129px"></div>
<div class="sec" style="top:137px">RESIZING</div>
<div class="abs" style="left:8px;top:156px;width:53px;height:39px;background:#3e3f41;border:1px solid #4b4c4e;border-radius:3px"></div>
<svg class="abs" style="left:8px;top:156px" width="53" height="39"><g stroke="#77787a" stroke-width="1" fill="none"><path d="M26.5 4v7M22 5.5h9M26.5 28v7M22 33.5h9M4.5 19.5h7M5.5 15v9M41.5 19.5h7M47.5 15v9"/><rect x="23" y="16" width="7" height="7" rx="1"/></g></svg>
<div class="abs" style="left:74px;top:156px;width:53px;height:39px;background:#3e3f41;border:1px solid #4b4c4e;border-radius:3px"></div>
<svg class="abs" style="left:74px;top:156px" width="53" height="39"><g stroke="#77787a" stroke-width="1" fill="none"><path d="M4 19.5h40M26.5 4v31M22 5.5h9M22 33.5h9M5.5 15v9"/></g></svg>
<div class="sm" style="left:35px;top:199px">Pin to Edge</div>
<div class="sm" style="left:86px;top:199px;transform:none">Fix Size</div>
<div class="hr" style="top:214px"></div>
<div class="sec" style="top:222px">PROTOTYPING</div>
<div class="hr2" style="top:240px"></div>
<div class="abs" style="left:8px;top:254px;width:10px;height:10px;border-radius:2px;background:#414244;border:1px solid #525355"></div>
<div class="lab" style="left:22px;top:252px;line-height:13px;font-size:9.5px">Fix position when sc</div>
<div class="hr" style="top:275px"></div>
<div class="sec" style="top:284px">APPEARANCE</div>
<div class="abs" style="left:8px;top:302px;width:120px;height:31px;background:#3b3c3e;border:1px solid #4b4c4e;border-radius:3px"></div>
<div class="lab" style="left:16px;top:313px;font-style:italic;font-size:9.5px;line-height:12px">No Layer Style</div>
<div class="abs" style="left:8px;top:340px;width:43px;height:18px;border-radius:3px;background:#5c5d5f"></div>
<svg class="abs" style="left:8px;top:340px" width="43" height="18"><path d="M21.5 4v10M16.5 9h10" stroke="#dcdcde" stroke-width="1"/></svg>
<div class="abs" style="left:55px;top:340px;width:43px;height:18px;border-radius:3px;background:#434446"></div>
<svg class="abs" style="left:55px;top:340px" width="43" height="18"><path d="M25.5 7a4.5 4.5 0 1 0 .8 3" fill="none" stroke="#66676a" stroke-width="1"/><path d="M26.8 4.5v3h-3" fill="none" stroke="#66676a" stroke-width="1"/></svg>
<div class="abs" style="left:103px;top:340px;width:43px;height:18px;border-radius:3px;background:#434446"></div>
<div class="sm" style="left:29.5px;top:361px">Create</div>
<div class="sm" style="left:77px;top:361px">Update</div>
<div class="hr2" style="top:379px"></div>
<div class="lab" style="left:8px;top:388px;line-height:12px">Opacity (Normal)</div>
<svg class="abs" style="left:90px;top:389px" width="8" height="12"><path d="M1.5 4.5l2.5-2.5 2.5 2.5M1.5 7.5l2.5 2.5 2.5-2.5" fill="none" stroke="#9a9b9d" stroke-width="1"/></svg>
<div class="abs" style="left:8px;top:404px;width:110px;height:2px;background:#0a7aff"></div>
<div class="hr" style="top:424px"></div>
<div class="sec" style="top:432px">STYLE</div>
<div class="hr2" style="top:450px"></div>
<div class="blab" style="top:458px;line-height:12px">Fills</div>
<div class="abs" style="left:8px;top:482px;width:10px;height:10px;border-radius:2px;background:#414244;border:1px solid #4a4b4d"></div>
<div class="abs" style="left:26px;top:478px;width:43px;height:17px;border-radius:3px;background:#3a3b3d;border:1px solid #4a4b4d;overflow:hidden"><div style="position:absolute;left:0;top:0;width:29px;height:17px;background-color:#3a3b3d;background-image:linear-gradient(45deg,#47484a 25%,transparent 25%,transparent 75%,#47484a 75%),linear-gradient(45deg,#47484a 25%,transparent 25%,transparent 75%,#47484a 75%);background-size:10px 10px;background-position:0 0,5px 5px"></div><div style="position:absolute;left:32px;top:5px;width:3px;height:6px;background:#77787a;border-radius:1px"></div><div style="position:absolute;left:37px;top:5px;border-left:3px solid #5e5f61;border-top:3px solid transparent;border-bottom:3px solid transparent"></div></div>
<div class="fld" style="left:74px;top:478px;width:50px;height:17px;color:#5e5f61;border-color:#454648;background:#353638;font-size:10px;line-height:15px"># 00000</div>
<div class="sm" style="left:47px;top:498px">Color</div>
<div class="sm" style="left:107px;top:498px;transform:none">H</div>
<div class="hr2" style="top:515px"></div>
<div class="blab" style="top:522px;line-height:12px">Borders</div>
<div class="abs" style="left:8px;top:545px;width:10px;height:10px;border-radius:2px;background:#0a7aff"></div>
<svg class="abs" style="left:8px;top:545px" width="10" height="10"><path d="M2.5 5.2l2 2 3.2-4" fill="none" stroke="#fff" stroke-width="1.3"/></svg>
<div class="abs" style="left:26px;top:542px;width:43px;height:17px;border-radius:3px;background:#3a3b3d;border:1px solid #4a4b4d;overflow:hidden"><div style="position:absolute;left:0;top:0;width:29px;height:17px;background:#a8a8a8"></div><div style="position:absolute;left:32px;top:5px;width:3px;height:6px;background:#b0b0b2;border-radius:1px"></div><div style="position:absolute;left:37px;top:5px;border-left:3px solid #8e8f91;border-top:3px solid transparent;border-bottom:3px solid transparent"></div></div>
<div class="abs" style="left:74px;top:542px;width:50px;height:17px;border-radius:3px;background:#353638;border:1px solid #4a4b4d"></div>
<svg class="abs" style="left:74px;top:542px" width="28" height="17"><rect x="9.5" y="4.5" width="8" height="8" fill="none" stroke="#d8d8da" stroke-width="1"/><path d="M7.5 4.5h12M7.5 12.5h12M9.5 2.5v12M17.5 2.5v12" stroke="#d8d8da" stroke-width="0.8"/></svg>
<div class="abs" style="left:101px;top:542px;width:20px;height:17px;background:#0a7aff"></div>
<svg class="abs" style="left:101px;top:542px" width="12" height="17"><path d="M8.5 3v11M6.5 3.5h4M6.5 13.5h4" stroke="#fff" stroke-width="1" fill="none"/></svg>
<div class="sm" style="left:47px;top:562px">Color</div>
<div class="sm" style="left:102px;top:562px;transform:none">Ce</div>
<div class="hr2" style="top:579px"></div>
<div class="abs" style="left:26px;top:589px;width:77px;height:16px;border-radius:3px;background:#353638;border:1px solid #454648;overflow:hidden"><div style="position:absolute;left:0;top:0;width:25px;height:16px;background:#2a5db0"></div><div style="position:absolute;left:25px;top:0;width:1px;height:16px;background:#454648"></div><div style="position:absolute;left:51px;top:0;width:1px;height:16px;background:#454648"></div></div>
<svg class="abs" style="left:26px;top:589px" width="77" height="16"><g fill="none" stroke="#77787a" stroke-width="1.2"><path d="M43 5h-4a3 3 0 0 0 0 6h4"/><path d="M69 4.5h-6v7h6"/></g><rect x="38" y="7" width="4" height="2" fill="#77787a"/><rect x="64" y="7" width="4" height="2" fill="#77787a"/><path d="M10 4.5h5M10 11.5h5" stroke="#9fb4d8" stroke-width="1"/><rect x="11" y="6.5" width="3" height="3" fill="#9fb4d8"/></svg>
<div class="sm" style="left:63.5px;top:609px">Ends</div>
<div class="abs" style="left:26px;top:625px;width:35px;height:17px;border-radius:3px;background:#353638;border:1px solid #454648"></div>
<div class="abs" style="left:67px;top:625px;width:36px;height:17px;border-radius:3px;background:#353638;border:1px solid #454648"></div>
<svg class="abs" style="left:26px;top:625px" width="80" height="17"><g fill="none" stroke="#68696b" stroke-width="1"><path d="M25.5 7l2.5-2.5 2.5 2.5M25.5 10l2.5 2.5 2.5-2.5"/><path d="M66.5 7l2.5-2.5 2.5 2.5M66.5 10l2.5 2.5 2.5-2.5"/><path d="M6 8.5h3M47 8.5h3"/></g></svg>
<div class="sm" style="left:43px;top:646px">Start</div>
<div class="sm" style="left:84px;top:646px">End</div>
<div class="hr2" style="top:662px"></div>
<div class="blab" style="top:669px;line-height:12px">Shadows</div>
<div class="hr2" style="top:689px"></div>
<div class="blab" style="top:696px;line-height:12px">Inner Shadows</div>
<div class="hr2" style="top:716px"></div>
<div class="blab" style="top:723px;line-height:12px">Blur</div>
<div class="hr" style="top:743px"></div>
<div class="sec" style="top:752px">MAKE EXPORTABLE</div>
<div class="abs" style="left:0;top:1019px;width:112px;height:4px;background:#434446"></div>
</div>

<div id="dialog">
<div class="abs" style="left:0;top:0;width:353px;height:46px;background:linear-gradient(#2c2d2f,#37383a)"></div>
<div class="abs" style="left:0;top:46px;width:353px;height:1px;background:#4d4e50"></div>
<svg class="abs" style="left:17px;top:11px" width="28" height="27" viewBox="0 0 28 27"><path d="M1.5 9.5L7 2.5h14l5.5 7L14 24.5z" fill="#fdb300"/><path d="M1.5 9.5h25L14 24.5z" fill="#ea6c00"/><path d="M7 9.5L14 2.5l7 7L14 24.5z" fill="#fdd231"/><path d="M7 9.5h14L14 24.5z" fill="#fdad00"/><path d="M7 2.5L7 9.5 1.5 9.5zM21 2.5L21 9.5 26.5 9.5z" fill="#feeeb7" opacity=".55"/></svg>
<div class="abs" style="left:50px;top:12px;font-size:10.5px;font-weight:bold;color:#f2f2f2;line-height:13px;white-space:nowrap">Rotate Copies</div>
<div class="abs" style="left:50px;top:24px;font-size:9.6px;color:#d6d6d8;line-height:13px;white-space:nowrap;letter-spacing:0.17px">Create a number of copies of the selected layer around a point.</div>
<div class="abs" style="left:25px;top:64px;font-size:11.5px;color:#ececee;line-height:14px;white-space:nowrap">Number of Copies:</div>
<div class="abs" style="left:125px;top:62px;width:38px;height:21px;border:2px solid #3a7ed4;border-radius:3px;background:#47484a;box-shadow:0 0 0 1px rgba(61,134,232,.35)"></div>
<div class="abs" style="left:131px;top:66px;font-size:10.5px;color:#f0f0f0;line-height:14px">71</div>
<div class="abs" style="left:167px;top:66px;font-size:9.6px;color:#e8e8ea;line-height:13px;white-space:nowrap;letter-spacing:0.1px">You will have 72 layers in total.</div>
<div class="abs" style="left:211px;top:97px;width:57px;height:16px;border-radius:3px;background:#9a9a9c;font-size:10.8px;color:#f6f6f6;text-align:center;line-height:16px">Cancel</div>
<div class="abs" style="left:278px;top:97px;width:58px;height:16px;border-radius:3px;background:#1769e0;font-size:10.8px;color:#fff;text-align:center;line-height:16px">Rotate</div>
</div>

</body></html>
